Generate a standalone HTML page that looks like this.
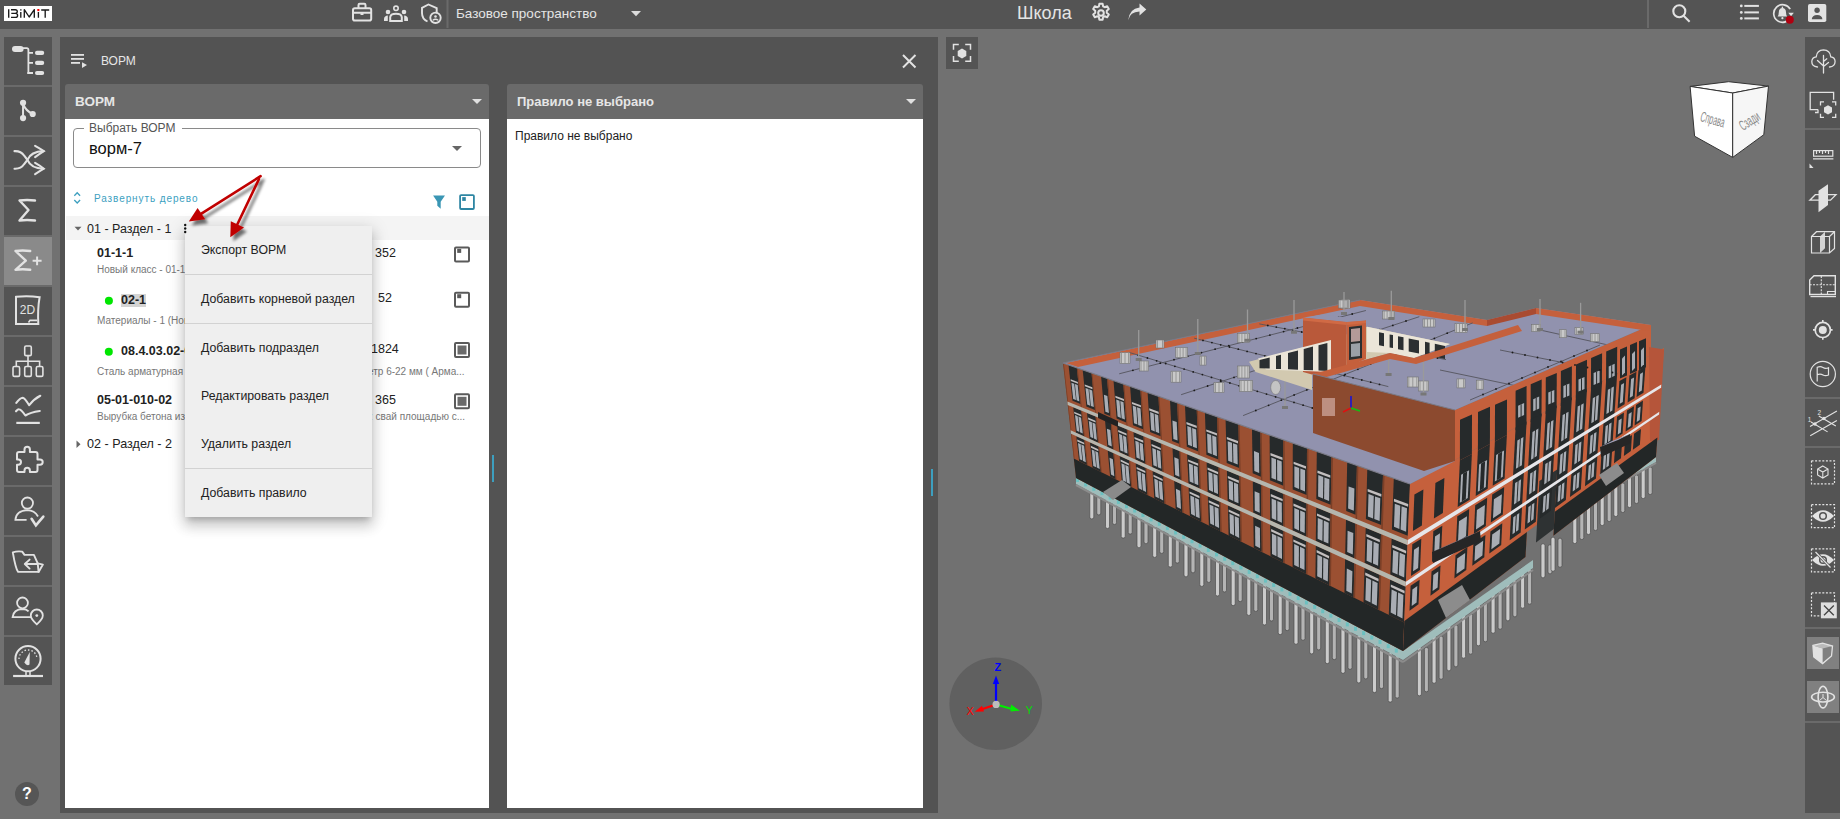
<!DOCTYPE html>
<html><head><meta charset="utf-8">
<style>
*{box-sizing:border-box;margin:0;padding:0}
html,body{width:1840px;height:819px;overflow:hidden;background:#717171;font-family:"Liberation Sans",sans-serif}
body{position:relative}
.a{position:absolute}
.t{position:absolute;white-space:nowrap;line-height:1}
#top{left:0;top:0;width:1840px;height:29px;background:#545454}
#ltb{left:4px;top:37px;width:48px;height:648px;background:#545454}
.lsep{position:absolute;left:0;width:48px;height:2px;background:#6a6a6a}
#panel{left:60px;top:37px;width:878px;height:776px;background:#535353}
.card{position:absolute;background:transparent}
.cbody{position:absolute;left:0;right:0;top:35px;bottom:0;background:#fff}
.chead{position:absolute;left:0;top:0;right:0;height:35px;background:#6a6a6a;border-radius:3px 3px 0 0}
#rtb{left:1805px;top:37px;width:35px;height:776px;background:#545454}
.rsep{position:absolute;left:0;width:35px;height:2px;background:#6a6a6a}
svg{position:absolute;left:0;top:0;overflow:visible}
</style></head><body>
<div id="top" class="a"></div>
<div id="ltb" class="a">
  <div class="lsep" style="top:48px"></div>
  <div class="lsep" style="top:98px"></div>
  <div class="lsep" style="top:148px"></div>
  <div class="lsep" style="top:198px"></div>
  <div class="a" style="left:0;top:200px;width:48px;height:48px;background:#8a8a8a"></div>
  <div class="lsep" style="top:248px"></div>
  <div class="lsep" style="top:298px"></div>
  <div class="lsep" style="top:348px"></div>
  <div class="lsep" style="top:398px"></div>
  <div class="lsep" style="top:448px"></div>
  <div class="lsep" style="top:498px"></div>
  <div class="lsep" style="top:548px"></div>
  <div class="lsep" style="top:598px"></div>
</div>
<div class="a" style="left:15px;top:782px;width:24px;height:24px;border-radius:50%;background:#565656"></div>
<div class="t" style="left:22px;top:786px;font-size:16px;font-weight:700;color:#fff;">?</div>

<svg id="bld" width="1840" height="819" viewBox="0 0 1840 819">
<rect x="1096.8" y="487.4" width="4" height="27.5" rx="1.8" fill="#b4b4b4" stroke="#4e4e4e" stroke-width="0.7"/>
<rect x="1112.5" y="496.1" width="4" height="28.4" rx="1.8" fill="#b4b4b4" stroke="#4e4e4e" stroke-width="0.7"/>
<rect x="1128.2" y="504.9" width="4" height="29.2" rx="1.8" fill="#b4b4b4" stroke="#4e4e4e" stroke-width="0.7"/>
<rect x="1144.0" y="513.6" width="4" height="30.1" rx="1.8" fill="#b4b4b4" stroke="#4e4e4e" stroke-width="0.7"/>
<rect x="1159.7" y="522.4" width="4" height="31.0" rx="1.8" fill="#b4b4b4" stroke="#4e4e4e" stroke-width="0.7"/>
<rect x="1175.3" y="531.1" width="4" height="32.0" rx="1.8" fill="#b4b4b4" stroke="#4e4e4e" stroke-width="0.7"/>
<rect x="1191.0" y="539.9" width="4" height="32.9" rx="1.8" fill="#b4b4b4" stroke="#4e4e4e" stroke-width="0.7"/>
<rect x="1206.8" y="548.6" width="4" height="33.8" rx="1.8" fill="#b4b4b4" stroke="#4e4e4e" stroke-width="0.7"/>
<rect x="1222.5" y="557.4" width="4" height="34.6" rx="1.8" fill="#b4b4b4" stroke="#4e4e4e" stroke-width="0.7"/>
<rect x="1238.2" y="566.1" width="4" height="35.5" rx="1.8" fill="#b4b4b4" stroke="#4e4e4e" stroke-width="0.7"/>
<rect x="1253.8" y="574.9" width="4" height="36.5" rx="1.8" fill="#b4b4b4" stroke="#4e4e4e" stroke-width="0.7"/>
<rect x="1269.5" y="583.6" width="4" height="37.4" rx="1.8" fill="#b4b4b4" stroke="#4e4e4e" stroke-width="0.7"/>
<rect x="1285.2" y="592.4" width="4" height="38.2" rx="1.8" fill="#b4b4b4" stroke="#4e4e4e" stroke-width="0.7"/>
<rect x="1301.0" y="601.1" width="4" height="39.1" rx="1.8" fill="#b4b4b4" stroke="#4e4e4e" stroke-width="0.7"/>
<rect x="1316.7" y="609.9" width="4" height="40.0" rx="1.8" fill="#b4b4b4" stroke="#4e4e4e" stroke-width="0.7"/>
<rect x="1332.3" y="618.6" width="4" height="41.0" rx="1.8" fill="#b4b4b4" stroke="#4e4e4e" stroke-width="0.7"/>
<rect x="1348.0" y="627.4" width="4" height="41.9" rx="1.8" fill="#b4b4b4" stroke="#4e4e4e" stroke-width="0.7"/>
<rect x="1363.8" y="636.1" width="4" height="42.8" rx="1.8" fill="#b4b4b4" stroke="#4e4e4e" stroke-width="0.7"/>
<rect x="1379.5" y="644.9" width="4" height="43.7" rx="1.8" fill="#b4b4b4" stroke="#4e4e4e" stroke-width="0.7"/>
<rect x="1395.2" y="653.6" width="4" height="44.5" rx="1.8" fill="#b4b4b4" stroke="#4e4e4e" stroke-width="0.7"/>
<rect x="1089.8" y="486.4" width="4" height="32.5" rx="1.8" fill="#cbcbcb" stroke="#4e4e4e" stroke-width="0.7"/>
<rect x="1105.5" y="495.1" width="4" height="33.4" rx="1.8" fill="#cbcbcb" stroke="#4e4e4e" stroke-width="0.7"/>
<rect x="1121.2" y="503.9" width="4" height="34.2" rx="1.8" fill="#cbcbcb" stroke="#4e4e4e" stroke-width="0.7"/>
<rect x="1137.0" y="512.6" width="4" height="35.1" rx="1.8" fill="#cbcbcb" stroke="#4e4e4e" stroke-width="0.7"/>
<rect x="1152.7" y="521.4" width="4" height="36.0" rx="1.8" fill="#cbcbcb" stroke="#4e4e4e" stroke-width="0.7"/>
<rect x="1168.3" y="530.1" width="4" height="37.0" rx="1.8" fill="#cbcbcb" stroke="#4e4e4e" stroke-width="0.7"/>
<rect x="1184.0" y="538.9" width="4" height="37.9" rx="1.8" fill="#cbcbcb" stroke="#4e4e4e" stroke-width="0.7"/>
<rect x="1199.8" y="547.6" width="4" height="38.8" rx="1.8" fill="#cbcbcb" stroke="#4e4e4e" stroke-width="0.7"/>
<rect x="1215.5" y="556.4" width="4" height="39.6" rx="1.8" fill="#cbcbcb" stroke="#4e4e4e" stroke-width="0.7"/>
<rect x="1231.2" y="565.1" width="4" height="40.5" rx="1.8" fill="#cbcbcb" stroke="#4e4e4e" stroke-width="0.7"/>
<rect x="1246.8" y="573.9" width="4" height="41.5" rx="1.8" fill="#cbcbcb" stroke="#4e4e4e" stroke-width="0.7"/>
<rect x="1262.5" y="582.6" width="4" height="42.4" rx="1.8" fill="#cbcbcb" stroke="#4e4e4e" stroke-width="0.7"/>
<rect x="1278.2" y="591.4" width="4" height="43.2" rx="1.8" fill="#cbcbcb" stroke="#4e4e4e" stroke-width="0.7"/>
<rect x="1294.0" y="600.1" width="4" height="44.1" rx="1.8" fill="#cbcbcb" stroke="#4e4e4e" stroke-width="0.7"/>
<rect x="1309.7" y="608.9" width="4" height="45.0" rx="1.8" fill="#cbcbcb" stroke="#4e4e4e" stroke-width="0.7"/>
<rect x="1325.3" y="617.6" width="4" height="46.0" rx="1.8" fill="#cbcbcb" stroke="#4e4e4e" stroke-width="0.7"/>
<rect x="1341.0" y="626.4" width="4" height="46.9" rx="1.8" fill="#cbcbcb" stroke="#4e4e4e" stroke-width="0.7"/>
<rect x="1356.8" y="635.1" width="4" height="47.8" rx="1.8" fill="#cbcbcb" stroke="#4e4e4e" stroke-width="0.7"/>
<rect x="1372.5" y="643.9" width="4" height="48.7" rx="1.8" fill="#cbcbcb" stroke="#4e4e4e" stroke-width="0.7"/>
<rect x="1388.2" y="652.6" width="4" height="49.5" rx="1.8" fill="#cbcbcb" stroke="#4e4e4e" stroke-width="0.7"/>
<rect x="1424.4" y="647.4" width="4" height="44.4" rx="1.8" fill="#b4b4b4" stroke="#4e4e4e" stroke-width="0.7"/>
<rect x="1439.1" y="636.1" width="4" height="43.1" rx="1.8" fill="#b4b4b4" stroke="#4e4e4e" stroke-width="0.7"/>
<rect x="1453.9" y="624.9" width="4" height="41.9" rx="1.8" fill="#b4b4b4" stroke="#4e4e4e" stroke-width="0.7"/>
<rect x="1468.6" y="613.6" width="4" height="40.6" rx="1.8" fill="#b4b4b4" stroke="#4e4e4e" stroke-width="0.7"/>
<rect x="1483.4" y="602.4" width="4" height="39.4" rx="1.8" fill="#b4b4b4" stroke="#4e4e4e" stroke-width="0.7"/>
<rect x="1498.1" y="591.1" width="4" height="38.1" rx="1.8" fill="#b4b4b4" stroke="#4e4e4e" stroke-width="0.7"/>
<rect x="1512.9" y="579.9" width="4" height="36.9" rx="1.8" fill="#b4b4b4" stroke="#4e4e4e" stroke-width="0.7"/>
<rect x="1527.6" y="568.6" width="4" height="35.6" rx="1.8" fill="#b4b4b4" stroke="#4e4e4e" stroke-width="0.7"/>
<rect x="1417.4" y="646.4" width="4" height="49.4" rx="1.8" fill="#cbcbcb" stroke="#4e4e4e" stroke-width="0.7"/>
<rect x="1432.1" y="635.1" width="4" height="48.1" rx="1.8" fill="#cbcbcb" stroke="#4e4e4e" stroke-width="0.7"/>
<rect x="1446.9" y="623.9" width="4" height="46.9" rx="1.8" fill="#cbcbcb" stroke="#4e4e4e" stroke-width="0.7"/>
<rect x="1461.6" y="612.6" width="4" height="45.6" rx="1.8" fill="#cbcbcb" stroke="#4e4e4e" stroke-width="0.7"/>
<rect x="1476.4" y="601.4" width="4" height="44.4" rx="1.8" fill="#cbcbcb" stroke="#4e4e4e" stroke-width="0.7"/>
<rect x="1491.1" y="590.1" width="4" height="43.1" rx="1.8" fill="#cbcbcb" stroke="#4e4e4e" stroke-width="0.7"/>
<rect x="1505.9" y="578.9" width="4" height="41.9" rx="1.8" fill="#cbcbcb" stroke="#4e4e4e" stroke-width="0.7"/>
<rect x="1520.6" y="567.6" width="4" height="40.6" rx="1.8" fill="#cbcbcb" stroke="#4e4e4e" stroke-width="0.7"/>
<rect x="1548.0" y="544.8" width="4" height="29.0" rx="1.8" fill="#b4b4b4" stroke="#4e4e4e" stroke-width="0.7"/>
<rect x="1558.0" y="538.2" width="4" height="29.0" rx="1.8" fill="#b4b4b4" stroke="#4e4e4e" stroke-width="0.7"/>
<rect x="1541.0" y="543.8" width="4" height="34.0" rx="1.8" fill="#cbcbcb" stroke="#4e4e4e" stroke-width="0.7"/>
<rect x="1551.0" y="537.2" width="4" height="34.0" rx="1.8" fill="#cbcbcb" stroke="#4e4e4e" stroke-width="0.7"/>
<rect x="1579.8" y="507.0" width="4" height="32.5" rx="1.8" fill="#b4b4b4" stroke="#4e4e4e" stroke-width="0.7"/>
<rect x="1593.5" y="499.0" width="4" height="31.5" rx="1.8" fill="#b4b4b4" stroke="#4e4e4e" stroke-width="0.7"/>
<rect x="1607.2" y="491.0" width="4" height="30.5" rx="1.8" fill="#b4b4b4" stroke="#4e4e4e" stroke-width="0.7"/>
<rect x="1620.8" y="483.0" width="4" height="29.5" rx="1.8" fill="#b4b4b4" stroke="#4e4e4e" stroke-width="0.7"/>
<rect x="1634.5" y="475.0" width="4" height="28.5" rx="1.8" fill="#b4b4b4" stroke="#4e4e4e" stroke-width="0.7"/>
<rect x="1648.2" y="467.0" width="4" height="27.5" rx="1.8" fill="#b4b4b4" stroke="#4e4e4e" stroke-width="0.7"/>
<rect x="1572.8" y="506.0" width="4" height="37.5" rx="1.8" fill="#cbcbcb" stroke="#4e4e4e" stroke-width="0.7"/>
<rect x="1586.5" y="498.0" width="4" height="36.5" rx="1.8" fill="#cbcbcb" stroke="#4e4e4e" stroke-width="0.7"/>
<rect x="1600.2" y="490.0" width="4" height="35.5" rx="1.8" fill="#cbcbcb" stroke="#4e4e4e" stroke-width="0.7"/>
<rect x="1613.8" y="482.0" width="4" height="34.5" rx="1.8" fill="#cbcbcb" stroke="#4e4e4e" stroke-width="0.7"/>
<rect x="1627.5" y="474.0" width="4" height="33.5" rx="1.8" fill="#cbcbcb" stroke="#4e4e4e" stroke-width="0.7"/>
<rect x="1641.2" y="466.0" width="4" height="32.5" rx="1.8" fill="#cbcbcb" stroke="#4e4e4e" stroke-width="0.7"/>
<polygon points="1076.0,476.0 1403.0,651.0 1403.0,660.0 1076.0,484.0" fill="#9fbdbb" />
<polygon points="1403.0,651.0 1533.0,560.0 1533.0,568.0 1403.0,660.0" fill="#9fbdbb" />
<polygon points="1561.0,508.0 1656.0,455.0 1656.0,462.0 1561.0,515.0" fill="#9fbdbb" />
<rect x="1076.0" y="478.0" width="3" height="4" fill="#6cc0c0"/>
<rect x="1084.2" y="482.4" width="3" height="4" fill="#6cc0c0"/>
<rect x="1092.3" y="486.8" width="3" height="4" fill="#6cc0c0"/>
<rect x="1100.5" y="491.1" width="3" height="4" fill="#6cc0c0"/>
<rect x="1108.7" y="495.5" width="3" height="4" fill="#6cc0c0"/>
<rect x="1116.9" y="499.9" width="3" height="4" fill="#6cc0c0"/>
<rect x="1125.0" y="504.2" width="3" height="4" fill="#6cc0c0"/>
<rect x="1133.2" y="508.6" width="3" height="4" fill="#6cc0c0"/>
<rect x="1141.4" y="513.0" width="3" height="4" fill="#6cc0c0"/>
<rect x="1149.6" y="517.4" width="3" height="4" fill="#6cc0c0"/>
<rect x="1157.8" y="521.8" width="3" height="4" fill="#6cc0c0"/>
<rect x="1165.9" y="526.1" width="3" height="4" fill="#6cc0c0"/>
<rect x="1174.1" y="530.5" width="3" height="4" fill="#6cc0c0"/>
<rect x="1182.3" y="534.9" width="3" height="4" fill="#6cc0c0"/>
<rect x="1190.5" y="539.2" width="3" height="4" fill="#6cc0c0"/>
<rect x="1198.6" y="543.6" width="3" height="4" fill="#6cc0c0"/>
<rect x="1206.8" y="548.0" width="3" height="4" fill="#6cc0c0"/>
<rect x="1215.0" y="552.4" width="3" height="4" fill="#6cc0c0"/>
<rect x="1223.2" y="556.8" width="3" height="4" fill="#6cc0c0"/>
<rect x="1231.3" y="561.1" width="3" height="4" fill="#6cc0c0"/>
<rect x="1239.5" y="565.5" width="3" height="4" fill="#6cc0c0"/>
<rect x="1247.7" y="569.9" width="3" height="4" fill="#6cc0c0"/>
<rect x="1255.8" y="574.2" width="3" height="4" fill="#6cc0c0"/>
<rect x="1264.0" y="578.6" width="3" height="4" fill="#6cc0c0"/>
<rect x="1272.2" y="583.0" width="3" height="4" fill="#6cc0c0"/>
<rect x="1280.4" y="587.4" width="3" height="4" fill="#6cc0c0"/>
<rect x="1288.5" y="591.8" width="3" height="4" fill="#6cc0c0"/>
<rect x="1296.7" y="596.1" width="3" height="4" fill="#6cc0c0"/>
<rect x="1304.9" y="600.5" width="3" height="4" fill="#6cc0c0"/>
<rect x="1313.1" y="604.9" width="3" height="4" fill="#6cc0c0"/>
<rect x="1321.2" y="609.2" width="3" height="4" fill="#6cc0c0"/>
<rect x="1329.4" y="613.6" width="3" height="4" fill="#6cc0c0"/>
<rect x="1337.6" y="618.0" width="3" height="4" fill="#6cc0c0"/>
<rect x="1345.8" y="622.4" width="3" height="4" fill="#6cc0c0"/>
<rect x="1354.0" y="626.8" width="3" height="4" fill="#6cc0c0"/>
<rect x="1362.1" y="631.1" width="3" height="4" fill="#6cc0c0"/>
<rect x="1370.3" y="635.5" width="3" height="4" fill="#6cc0c0"/>
<rect x="1378.5" y="639.9" width="3" height="4" fill="#6cc0c0"/>
<rect x="1386.7" y="644.2" width="3" height="4" fill="#6cc0c0"/>
<rect x="1394.8" y="648.6" width="3" height="4" fill="#6cc0c0"/>
<line x1="1076.0" y1="485.0" x2="1403.0" y2="662.0" stroke="#8c8c8c" stroke-width="2" />
<line x1="1403.0" y1="662.0" x2="1533.0" y2="570.0" stroke="#8c8c8c" stroke-width="2" />
<line x1="1561.0" y1="516.0" x2="1656.0" y2="463.0" stroke="#8c8c8c" stroke-width="2" />
<polygon points="1063.0,363.0 1410.0,484.0 1403.0,651.0 1076.0,478.0" fill="#9b5032" />
<polygon points="1073.8,458.4 1404.2,622.6 1403.0,651.0 1076.0,478.0" fill="#232727" />
<polygon points="1063.0,363.0 1063.8,363.3 1074.6,458.8 1073.8,458.4" fill="#7a3f27" />
<polygon points="1068.5,364.9 1076.8,367.8 1080.6,404.1 1072.5,400.8" fill="#262a2b" />
<polygon points="1073.2,407.2 1081.3,410.6 1084.0,436.3 1076.0,432.7" fill="#262a2b" />
<polygon points="1076.3,436.2 1084.3,439.8 1087.0,465.0 1079.1,461.1" fill="#262a2b" />
<polygon points="1071.4,382.7 1074.2,383.7 1076.0,400.0 1073.2,398.9" fill="#a9adb4" />
<polygon points="1074.9,384.0 1077.7,385.0 1079.4,401.4 1076.6,400.3" fill="#a9adb4" />
<polygon points="1070.6,379.2 1077.8,381.9 1078.0,383.8 1070.8,381.1" fill="#c2bebe" />
<polygon points="1075.0,415.1 1077.7,416.3 1079.4,432.0 1076.7,430.8" fill="#a9adb4" />
<polygon points="1078.4,416.6 1081.1,417.8 1082.8,433.5 1080.0,432.3" fill="#a9adb4" />
<polygon points="1074.1,411.7 1081.3,414.7 1081.5,416.6 1074.3,413.6" fill="#c2bebe" />
<polygon points="1078.0,443.0 1080.7,444.3 1082.4,460.5 1079.8,459.2" fill="#a9adb4" />
<polygon points="1081.3,444.5 1084.1,445.8 1085.8,462.2 1083.1,460.9" fill="#a9adb4" />
<polygon points="1077.2,439.5 1084.2,442.8 1084.4,444.6 1077.4,441.4" fill="#c2bebe" />
<polygon points="1076.8,367.8 1077.7,368.1 1087.8,465.4 1087.0,465.0" fill="#7a3f27" />
<polygon points="1082.7,369.9 1091.5,372.9 1095.0,409.9 1086.4,406.4" fill="#262a2b" />
<polygon points="1087.0,412.9 1095.6,416.5 1098.1,442.7 1089.6,438.9" fill="#262a2b" />
<polygon points="1090.0,442.4 1098.5,446.3 1100.9,471.9 1092.5,467.8" fill="#262a2b" />
<polygon points="1085.5,388.0 1088.5,389.1 1090.1,405.7 1087.2,404.5" fill="#a9adb4" />
<polygon points="1089.2,389.3 1092.2,390.4 1093.8,407.1 1090.8,405.9" fill="#a9adb4" />
<polygon points="1084.7,384.5 1092.4,387.3 1092.5,389.2 1084.9,386.3" fill="#c2bebe" />
<polygon points="1088.8,421.0 1091.8,422.3 1093.3,438.3 1090.4,437.0" fill="#a9adb4" />
<polygon points="1092.4,422.6 1095.4,423.8 1096.9,439.9 1094.0,438.6" fill="#a9adb4" />
<polygon points="1088.0,417.5 1095.5,420.7 1095.7,422.6 1088.2,419.4" fill="#c2bebe" />
<polygon points="1091.7,449.4 1094.5,450.7 1096.2,467.3 1093.3,465.9" fill="#a9adb4" />
<polygon points="1095.2,451.0 1098.1,452.4 1099.7,469.1 1096.8,467.6" fill="#a9adb4" />
<polygon points="1090.8,445.8 1098.3,449.3 1098.5,451.2 1091.0,447.7" fill="#c2bebe" />
<polygon points="1091.5,372.9 1092.4,373.3 1101.8,472.4 1100.9,471.9" fill="#7a3f27" />
<polygon points="1101.1,376.3 1107.0,378.3 1110.2,416.0 1104.4,413.7" fill="#262a2b" />
<polygon points="1105.0,420.3 1110.8,422.7 1113.1,449.5 1107.4,446.9" fill="#262a2b" />
<polygon points="1107.7,450.5 1113.4,453.1 1115.7,479.3 1110.1,476.5" fill="#262a2b" />
<polygon points="1103.9,394.8 1107.4,396.1 1108.9,413.1 1105.4,411.8" fill="#a9adb4" />
<polygon points="1106.9,428.7 1110.3,430.1 1111.8,446.5 1108.3,445.0" fill="#a9adb4" />
<polygon points="1109.5,457.7 1112.9,459.3 1114.3,476.3 1111.0,474.6" fill="#a9adb4" />
<polygon points="1107.0,378.3 1108.0,378.7 1116.6,479.7 1115.7,479.3" fill="#7a3f27" />
<polygon points="1113.5,380.6 1123.3,384.0 1126.2,422.5 1116.6,418.6" fill="#262a2b" />
<polygon points="1117.2,425.3 1126.8,429.3 1128.9,456.6 1119.4,452.3" fill="#262a2b" />
<polygon points="1119.7,456.0 1129.1,460.3 1131.2,487.0 1121.9,482.3" fill="#262a2b" />
<polygon points="1116.2,399.4 1119.5,400.7 1120.9,417.9 1117.6,416.6" fill="#a9adb4" />
<polygon points="1120.3,401.0 1123.5,402.2 1124.9,419.5 1121.6,418.2" fill="#a9adb4" />
<polygon points="1115.3,395.8 1123.9,398.9 1124.0,400.9 1115.5,397.7" fill="#c2bebe" />
<polygon points="1119.0,433.8 1122.2,435.2 1123.6,451.8 1120.3,450.4" fill="#a9adb4" />
<polygon points="1123.0,435.5 1126.2,436.9 1127.5,453.6 1124.3,452.2" fill="#a9adb4" />
<polygon points="1118.1,430.1 1126.5,433.6 1126.7,435.6 1118.3,432.1" fill="#c2bebe" />
<polygon points="1121.4,463.3 1124.6,464.8 1126.0,482.0 1122.8,480.4" fill="#a9adb4" />
<polygon points="1125.3,465.1 1128.5,466.6 1129.9,483.9 1126.7,482.4" fill="#a9adb4" />
<polygon points="1120.5,459.6 1128.8,463.4 1129.0,465.4 1120.7,461.5" fill="#c2bebe" />
<polygon points="1123.3,384.0 1124.3,384.4 1132.2,487.5 1131.2,487.0" fill="#7a3f27" />
<polygon points="1130.1,386.4 1140.4,390.0 1143.1,429.2 1133.0,425.2" fill="#262a2b" />
<polygon points="1133.5,432.1 1143.5,436.2 1145.4,464.1 1135.5,459.6" fill="#262a2b" />
<polygon points="1135.7,463.3 1145.7,467.9 1147.5,495.1 1137.7,490.2" fill="#262a2b" />
<polygon points="1132.7,405.6 1136.2,406.9 1137.4,424.5 1134.0,423.2" fill="#a9adb4" />
<polygon points="1137.0,407.2 1140.5,408.5 1141.7,426.2 1138.2,424.9" fill="#a9adb4" />
<polygon points="1131.9,401.9 1140.8,405.2 1141.0,407.2 1132.0,403.9" fill="#c2bebe" />
<polygon points="1135.3,440.7 1138.7,442.1 1139.9,459.1 1136.5,457.6" fill="#a9adb4" />
<polygon points="1139.5,442.5 1142.9,443.9 1144.0,461.0 1140.7,459.5" fill="#a9adb4" />
<polygon points="1134.4,436.9 1143.2,440.6 1143.4,442.7 1134.6,438.9" fill="#c2bebe" />
<polygon points="1137.4,470.8 1140.8,472.3 1142.0,489.9 1138.7,488.3" fill="#a9adb4" />
<polygon points="1141.6,472.7 1144.9,474.3 1146.1,492.0 1142.8,490.3" fill="#a9adb4" />
<polygon points="1136.6,467.0 1145.3,471.0 1145.4,473.0 1136.7,469.0" fill="#c2bebe" />
<polygon points="1140.4,390.0 1141.5,390.4 1148.5,495.6 1147.5,495.1" fill="#7a3f27" />
<polygon points="1147.6,392.5 1158.4,396.3 1160.7,436.3 1150.1,432.1" fill="#262a2b" />
<polygon points="1150.6,439.1 1161.1,443.4 1162.7,471.9 1152.3,467.2" fill="#262a2b" />
<polygon points="1152.6,471.0 1163.0,475.8 1164.6,503.6 1154.3,498.5" fill="#262a2b" />
<polygon points="1150.1,412.1 1153.7,413.5 1154.8,431.5 1151.2,430.0" fill="#a9adb4" />
<polygon points="1154.6,413.8 1158.2,415.2 1159.3,433.2 1155.7,431.8" fill="#a9adb4" />
<polygon points="1149.2,408.3 1158.6,411.8 1158.8,413.9 1149.3,410.4" fill="#c2bebe" />
<polygon points="1152.3,447.9 1155.9,449.4 1157.0,466.8 1153.4,465.2" fill="#a9adb4" />
<polygon points="1156.8,449.8 1160.3,451.3 1161.3,468.7 1157.8,467.2" fill="#a9adb4" />
<polygon points="1151.5,444.1 1160.7,448.0 1160.9,450.0 1151.6,446.1" fill="#c2bebe" />
<polygon points="1154.3,478.6 1157.8,480.3 1158.9,498.2 1155.4,496.5" fill="#a9adb4" />
<polygon points="1158.6,480.7 1162.1,482.3 1163.2,500.4 1159.7,498.6" fill="#a9adb4" />
<polygon points="1153.4,474.8 1162.6,479.0 1162.7,481.0 1153.6,476.8" fill="#c2bebe" />
<polygon points="1158.4,396.3 1159.5,396.6 1165.7,504.1 1164.6,503.6" fill="#7a3f27" />
<polygon points="1170.0,400.3 1177.1,402.8 1179.1,443.7 1172.1,440.9" fill="#262a2b" />
<polygon points="1172.5,448.1 1179.5,451.0 1180.9,480.1 1174.0,477.0" fill="#262a2b" />
<polygon points="1174.2,480.9 1181.1,484.0 1182.5,512.4 1175.7,509.1" fill="#262a2b" />
<polygon points="1172.4,420.5 1176.7,422.1 1177.6,440.5 1173.4,438.9" fill="#a9adb4" />
<polygon points="1174.3,457.2 1178.5,459.0 1179.4,476.8 1175.2,475.0" fill="#a9adb4" />
<polygon points="1175.9,488.7 1180.1,490.7 1181.0,509.1 1176.9,507.1" fill="#a9adb4" />
<polygon points="1177.1,402.8 1178.3,403.2 1183.6,513.0 1182.5,512.4" fill="#7a3f27" />
<polygon points="1185.0,405.5 1196.7,409.6 1198.4,451.5 1186.8,446.8" fill="#262a2b" />
<polygon points="1187.1,454.2 1198.6,458.9 1199.8,488.6 1188.5,483.5" fill="#262a2b" />
<polygon points="1188.6,487.5 1200.0,492.7 1201.1,521.7 1189.9,516.1" fill="#262a2b" />
<polygon points="1187.3,426.0 1191.2,427.5 1192.0,446.3 1188.1,444.7" fill="#a9adb4" />
<polygon points="1192.1,427.9 1196.1,429.4 1196.9,448.2 1192.9,446.7" fill="#a9adb4" />
<polygon points="1186.4,422.0 1196.7,425.8 1196.7,428.0 1186.5,424.2" fill="#c2bebe" />
<polygon points="1188.9,463.4 1192.8,465.1 1193.6,483.2 1189.7,481.4" fill="#a9adb4" />
<polygon points="1193.7,465.5 1197.6,467.1 1198.3,485.3 1194.5,483.6" fill="#a9adb4" />
<polygon points="1188.0,459.4 1198.2,463.6 1198.2,465.8 1188.1,461.5" fill="#c2bebe" />
<polygon points="1190.3,495.5 1194.2,497.3 1195.0,516.0 1191.1,514.1" fill="#a9adb4" />
<polygon points="1195.1,497.7 1198.9,499.5 1199.7,518.3 1195.8,516.5" fill="#a9adb4" />
<polygon points="1189.5,491.4 1199.4,496.0 1199.5,498.2 1189.6,493.5" fill="#c2bebe" />
<polygon points="1196.7,409.6 1197.9,410.1 1202.3,522.3 1201.1,521.7" fill="#7a3f27" />
<polygon points="1204.9,412.5 1217.1,416.7 1218.4,459.6 1206.4,454.7" fill="#262a2b" />
<polygon points="1206.6,462.2 1218.6,467.1 1219.5,497.5 1207.7,492.2" fill="#262a2b" />
<polygon points="1207.8,496.3 1219.7,501.7 1220.5,531.4 1208.9,525.6" fill="#262a2b" />
<polygon points="1207.1,433.5 1211.2,435.0 1211.8,454.2 1207.7,452.6" fill="#a9adb4" />
<polygon points="1212.2,435.4 1216.3,436.9 1216.9,456.2 1212.8,454.6" fill="#a9adb4" />
<polygon points="1206.2,429.4 1216.9,433.3 1217.0,435.5 1206.3,431.5" fill="#c2bebe" />
<polygon points="1208.4,471.7 1212.4,473.4 1213.1,491.9 1209.0,490.1" fill="#a9adb4" />
<polygon points="1213.4,473.8 1217.5,475.5 1218.0,494.1 1214.0,492.3" fill="#a9adb4" />
<polygon points="1207.5,467.6 1218.1,472.0 1218.1,474.2 1207.6,469.7" fill="#c2bebe" />
<polygon points="1209.5,504.4 1213.5,506.3 1214.2,525.5 1210.2,523.5" fill="#a9adb4" />
<polygon points="1214.5,506.7 1218.5,508.6 1219.1,527.9 1215.1,526.0" fill="#a9adb4" />
<polygon points="1208.7,500.3 1219.1,505.1 1219.1,507.3 1208.8,502.5" fill="#c2bebe" />
<polygon points="1217.1,416.7 1218.4,417.2 1221.8,532.0 1220.5,531.4" fill="#7a3f27" />
<polygon points="1225.6,419.7 1238.4,424.1 1239.3,467.9 1226.7,462.9" fill="#262a2b" />
<polygon points="1226.9,470.6 1239.4,475.7 1240.1,506.8 1227.7,501.2" fill="#262a2b" />
<polygon points="1227.9,505.4 1240.1,511.0 1240.8,541.4 1228.6,535.4" fill="#262a2b" />
<polygon points="1227.7,441.2 1232.0,442.8 1232.4,462.4 1228.2,460.7" fill="#a9adb4" />
<polygon points="1233.0,443.2 1237.3,444.8 1237.7,464.5 1233.4,462.8" fill="#a9adb4" />
<polygon points="1226.8,437.0 1238.0,441.1 1238.0,443.4 1226.9,439.2" fill="#c2bebe" />
<polygon points="1228.7,480.3 1232.9,482.1 1233.3,501.0 1229.1,499.1" fill="#a9adb4" />
<polygon points="1233.9,482.5 1238.1,484.3 1238.5,503.3 1234.3,501.4" fill="#a9adb4" />
<polygon points="1227.8,476.0 1238.8,480.6 1238.8,482.9 1227.9,478.3" fill="#c2bebe" />
<polygon points="1229.5,513.8 1233.7,515.7 1234.1,535.4 1230.0,533.3" fill="#a9adb4" />
<polygon points="1234.7,516.2 1238.8,518.1 1239.2,537.9 1235.1,535.8" fill="#a9adb4" />
<polygon points="1228.7,509.5 1239.5,514.5 1239.5,516.8 1228.7,511.8" fill="#c2bebe" />
<polygon points="1238.4,424.1 1239.7,424.6 1242.0,542.0 1240.8,541.4" fill="#7a3f27" />
<polygon points="1252.0,428.9 1260.4,431.8 1260.9,476.7 1252.7,473.3" fill="#262a2b" />
<polygon points="1252.8,481.2 1261.0,484.6 1261.4,516.4 1253.3,512.8" fill="#262a2b" />
<polygon points="1253.3,517.1 1261.4,520.8 1261.8,551.8 1253.8,547.9" fill="#262a2b" />
<polygon points="1254.0,451.0 1259.0,452.9 1259.2,473.1 1254.3,471.1" fill="#a9adb4" />
<polygon points="1254.6,491.2 1259.5,493.3 1259.7,512.8 1254.8,510.6" fill="#a9adb4" />
<polygon points="1255.1,525.7 1259.9,528.0 1260.1,548.2 1255.3,545.8" fill="#a9adb4" />
<polygon points="1260.4,431.8 1261.8,432.3 1263.1,552.5 1261.8,551.8" fill="#7a3f27" />
<polygon points="1269.6,435.0 1283.3,439.8 1283.4,485.7 1269.9,480.3" fill="#262a2b" />
<polygon points="1270.0,488.3 1283.4,493.8 1283.5,526.4 1270.2,520.4" fill="#262a2b" />
<polygon points="1270.2,524.8 1283.5,530.8 1283.5,562.7 1270.5,556.2" fill="#262a2b" />
<polygon points="1271.4,457.5 1276.0,459.3 1276.1,479.8 1271.5,478.0" fill="#a9adb4" />
<polygon points="1277.1,459.7 1281.7,461.4 1281.8,482.1 1277.2,480.3" fill="#a9adb4" />
<polygon points="1270.5,453.1 1282.5,457.6 1282.5,459.9 1270.5,455.5" fill="#c2bebe" />
<polygon points="1271.6,498.5 1276.2,500.4 1276.3,520.2 1271.8,518.2" fill="#a9adb4" />
<polygon points="1277.3,500.9 1281.8,502.8 1281.9,522.7 1277.4,520.7" fill="#a9adb4" />
<polygon points="1270.8,494.0 1282.6,499.0 1282.6,501.3 1270.8,496.4" fill="#c2bebe" />
<polygon points="1271.9,533.6 1276.4,535.7 1276.5,556.2 1272.0,554.0" fill="#a9adb4" />
<polygon points="1277.4,536.1 1281.9,538.2 1282.0,558.9 1277.5,556.7" fill="#a9adb4" />
<polygon points="1271.1,529.1 1282.7,534.5 1282.7,536.8 1271.1,531.4" fill="#c2bebe" />
<polygon points="1283.3,439.8 1284.7,440.3 1284.9,563.3 1283.5,562.7" fill="#7a3f27" />
<polygon points="1292.8,443.1 1307.0,448.1 1306.7,495.1 1292.7,489.4" fill="#262a2b" />
<polygon points="1292.7,497.7 1306.6,503.4 1306.4,536.7 1292.6,530.5" fill="#262a2b" />
<polygon points="1292.6,535.0 1306.3,541.3 1306.1,573.9 1292.6,567.2" fill="#262a2b" />
<polygon points="1294.4,466.2 1299.2,468.0 1299.1,489.0 1294.4,487.1" fill="#a9adb4" />
<polygon points="1300.3,468.4 1305.1,470.2 1305.0,491.4 1300.3,489.5" fill="#a9adb4" />
<polygon points="1293.6,461.7 1306.0,466.3 1306.0,468.7 1293.6,464.1" fill="#c2bebe" />
<polygon points="1294.3,508.1 1299.0,510.1 1299.0,530.4 1294.3,528.3" fill="#a9adb4" />
<polygon points="1300.2,510.5 1304.9,512.5 1304.7,533.0 1300.1,530.9" fill="#a9adb4" />
<polygon points="1293.5,503.5 1305.7,508.7 1305.7,511.1 1293.5,505.9" fill="#c2bebe" />
<polygon points="1294.2,544.0 1298.9,546.2 1298.8,567.2 1294.2,565.0" fill="#a9adb4" />
<polygon points="1300.0,546.7 1304.6,548.9 1304.5,570.0 1299.9,567.8" fill="#a9adb4" />
<polygon points="1293.4,539.4 1305.5,545.0 1305.5,547.4 1293.4,541.8" fill="#c2bebe" />
<polygon points="1307.0,448.1 1308.5,448.6 1307.5,574.6 1306.1,573.9" fill="#7a3f27" />
<polygon points="1316.8,451.5 1331.5,456.6 1330.7,504.8 1316.3,498.9" fill="#262a2b" />
<polygon points="1316.2,507.4 1330.6,513.3 1330.1,547.4 1315.8,541.0" fill="#262a2b" />
<polygon points="1315.8,545.6 1330.0,552.1 1329.5,585.5 1315.4,578.5" fill="#262a2b" />
<polygon points="1318.3,475.1 1323.3,477.0 1323.0,498.5 1318.1,496.6" fill="#a9adb4" />
<polygon points="1324.4,477.4 1329.4,479.3 1329.1,501.0 1324.1,499.0" fill="#a9adb4" />
<polygon points="1317.5,470.5 1330.3,475.2 1330.3,477.7 1317.4,472.9" fill="#c2bebe" />
<polygon points="1317.8,518.0 1322.7,520.1 1322.4,540.9 1317.6,538.7" fill="#a9adb4" />
<polygon points="1323.8,520.6 1328.7,522.7 1328.4,543.6 1323.6,541.4" fill="#a9adb4" />
<polygon points="1317.0,513.4 1329.7,518.7 1329.6,521.2 1317.0,515.8" fill="#c2bebe" />
<polygon points="1317.4,554.8 1322.2,557.1 1321.9,578.6 1317.2,576.3" fill="#a9adb4" />
<polygon points="1323.3,557.6 1328.2,559.8 1327.8,581.5 1323.1,579.2" fill="#a9adb4" />
<polygon points="1316.6,550.1 1329.1,555.9 1329.0,558.4 1316.6,552.6" fill="#c2bebe" />
<polygon points="1331.5,456.6 1333.0,457.2 1330.9,586.2 1329.5,585.5" fill="#7a3f27" />
<polygon points="1347.2,462.1 1356.9,465.5 1355.6,514.8 1346.2,511.0" fill="#262a2b" />
<polygon points="1346.0,519.6 1355.4,523.5 1354.5,558.5 1345.2,554.3" fill="#262a2b" />
<polygon points="1345.1,559.0 1354.4,563.3 1353.6,597.5 1344.4,592.9" fill="#262a2b" />
<polygon points="1348.6,486.5 1354.4,488.6 1353.8,510.8 1348.1,508.6" fill="#a9adb4" />
<polygon points="1347.6,530.7 1353.3,533.1 1352.8,554.5 1347.2,552.0" fill="#a9adb4" />
<polygon points="1346.8,568.6 1352.4,571.2 1351.8,593.4 1346.3,590.7" fill="#a9adb4" />
<polygon points="1356.9,465.5 1358.4,466.0 1355.1,598.2 1353.6,597.5" fill="#7a3f27" />
<polygon points="1367.3,469.1 1383.0,474.6 1381.3,525.1 1365.9,518.9" fill="#262a2b" />
<polygon points="1365.7,527.7 1381.0,534.1 1379.8,569.9 1364.7,563.1" fill="#262a2b" />
<polygon points="1364.5,567.9 1379.7,574.8 1378.5,609.8 1363.5,602.4" fill="#262a2b" />
<polygon points="1368.5,493.9 1373.8,495.9 1373.1,518.5 1367.9,516.4" fill="#a9adb4" />
<polygon points="1375.0,496.4 1380.3,498.3 1379.6,521.1 1374.3,519.0" fill="#a9adb4" />
<polygon points="1367.7,489.1 1381.4,494.1 1381.3,496.7 1367.6,491.6" fill="#c2bebe" />
<polygon points="1367.2,539.0 1372.4,541.2 1371.7,563.0 1366.6,560.7" fill="#a9adb4" />
<polygon points="1373.6,541.7 1378.8,543.9 1378.1,565.8 1373.0,563.5" fill="#a9adb4" />
<polygon points="1366.4,534.1 1379.9,539.7 1379.8,542.3 1366.3,536.6" fill="#c2bebe" />
<polygon points="1366.1,577.6 1371.2,580.0 1370.5,602.6 1365.4,600.1" fill="#a9adb4" />
<polygon points="1372.4,580.5 1377.6,582.9 1376.8,605.7 1371.7,603.2" fill="#a9adb4" />
<polygon points="1365.3,572.6 1378.6,578.8 1378.5,581.4 1365.2,575.2" fill="#c2bebe" />
<polygon points="1383.0,474.6 1384.6,475.2 1380.0,610.6 1378.5,609.8" fill="#7a3f27" />
<polygon points="1393.8,478.4 1410.0,484.0 1407.8,535.8 1391.9,529.4" fill="#262a2b" />
<polygon points="1391.6,538.4 1407.4,545.0 1405.9,581.7 1390.3,574.6" fill="#262a2b" />
<polygon points="1390.1,579.6 1405.7,586.7 1404.2,622.6 1388.8,615.0" fill="#262a2b" />
<polygon points="1394.8,503.8 1400.3,505.8 1399.4,529.0 1394.0,526.8" fill="#a9adb4" />
<polygon points="1401.6,506.3 1407.0,508.3 1406.1,531.7 1400.6,529.5" fill="#a9adb4" />
<polygon points="1394.0,498.8 1408.2,504.0 1408.1,506.7 1393.9,501.4" fill="#c2bebe" />
<polygon points="1393.1,549.9 1398.5,552.2 1397.6,574.6 1392.3,572.2" fill="#a9adb4" />
<polygon points="1399.7,552.7 1405.1,555.0 1404.2,577.5 1398.8,575.1" fill="#a9adb4" />
<polygon points="1392.3,544.9 1406.2,550.7 1406.1,553.4 1392.2,547.5" fill="#c2bebe" />
<polygon points="1391.6,589.5 1396.9,592.0 1396.0,615.2 1390.7,612.6" fill="#a9adb4" />
<polygon points="1398.1,592.5 1403.4,595.0 1402.5,618.4 1397.2,615.8" fill="#a9adb4" />
<polygon points="1390.8,584.4 1404.6,590.8 1404.5,593.5 1390.8,587.1" fill="#c2bebe" />
<polygon points="1067.4,401.5 1407.7,539.9 1407.4,545.0 1067.7,405.0" fill="#b5b6ae" />
<polygon points="1070.6,430.3 1405.9,581.7 1405.7,586.7 1071.0,433.7" fill="#b5b6ae" />
<polygon points="1098.0,412.0 1118.0,421.0 1118.0,427.0 1098.0,418.0" fill="#222" />
<polygon points="1103.0,492.0 1122.0,480.0 1131.0,487.0 1113.0,500.0" fill="#8a8a8a" />
<polygon points="1455.0,459.9 1455.0,410.0 1651.0,325.0 1651.0,355.0" fill="#c5603c" />
<polygon points="1410.0,484.0 1664.0,348.0 1656.0,457.0 1553.4,535.7 1554.8,511.8 1526.9,532.1 1525.5,557.1 1403.0,651.0" fill="#c5603c" />
<polygon points="1649.0,347.0 1664.0,349.6 1659.0,440.0 1650.0,441.0" fill="#b5553a" />
<polygon points="1404.3,620.9 1526.9,532.1 1525.5,557.1 1403.0,651.0" fill="#232727" />
<polygon points="1539.4,481.0 1557.2,469.4 1553.8,529.0 1536.0,542.5" fill="#2e3233" />
<polygon points="1554.8,511.8 1657.4,437.4 1656.0,457.0 1553.4,535.7" fill="#232727" />
<polygon points="1460.0,419.8 1472.0,414.6 1471.9,453.9 1459.9,460.3" fill="#262a2b" />
<polygon points="1459.9,460.3 1471.9,453.9 1469.7,499.7 1457.7,507.0" fill="#262a2b" />
<polygon points="1461.1,474.8 1469.1,470.3 1467.8,497.9 1459.8,502.7" fill="#a9adb4" />
<polygon points="1463.1,473.6 1467.1,471.4 1465.8,499.1 1461.8,501.5" fill="#262a2b" />
<polygon points="1457.3,516.3 1469.2,508.9 1467.9,537.9 1455.9,545.9" fill="#262a2b" />
<polygon points="1459.0,521.3 1467.0,516.3 1466.0,536.2 1458.0,541.5" fill="#a9adb4" />
<polygon points="1455.5,555.2 1467.4,547.1 1466.3,570.0 1454.4,578.6" fill="#262a2b" />
<polygon points="1457.2,558.5 1465.2,553.1 1464.5,568.4 1456.5,574.1" fill="#a9adb4" />
<polygon points="1478.0,412.0 1490.0,406.8 1489.9,444.1 1477.9,450.6" fill="#262a2b" />
<polygon points="1477.9,450.6 1489.9,444.1 1487.7,488.8 1475.7,496.1" fill="#262a2b" />
<polygon points="1479.1,464.6 1487.1,460.1 1485.8,487.0 1477.8,491.8" fill="#a9adb4" />
<polygon points="1481.1,463.5 1485.1,461.3 1483.8,488.2 1479.8,490.6" fill="#262a2b" />
<polygon points="1475.2,505.2 1487.2,497.7 1485.8,525.9 1473.9,533.9" fill="#262a2b" />
<polygon points="1476.9,509.9 1484.9,504.9 1484.0,524.3 1476.0,529.6" fill="#a9adb4" />
<polygon points="1473.4,543.0 1485.4,534.9 1484.3,557.2 1472.3,565.7" fill="#262a2b" />
<polygon points="1475.2,546.2 1483.2,540.7 1482.4,555.6 1474.5,561.3" fill="#a9adb4" />
<polygon points="1495.0,404.7 1507.0,399.4 1506.9,435.0 1494.9,441.4" fill="#262a2b" />
<polygon points="1494.9,441.4 1506.9,435.0 1504.6,478.4 1492.7,485.7" fill="#262a2b" />
<polygon points="1496.1,455.1 1504.1,450.6 1502.8,476.7 1494.8,481.6" fill="#a9adb4" />
<polygon points="1498.1,453.9 1502.1,451.7 1500.8,477.9 1496.8,480.3" fill="#262a2b" />
<polygon points="1492.2,494.6 1504.2,487.1 1502.8,514.6 1490.8,522.6" fill="#262a2b" />
<polygon points="1493.9,499.2 1501.9,494.2 1500.9,513.1 1493.0,518.3" fill="#a9adb4" />
<polygon points="1490.4,531.5 1502.3,523.3 1501.2,545.0 1489.3,553.6" fill="#262a2b" />
<polygon points="1492.2,534.5 1500.1,529.0 1499.4,543.6 1491.4,549.2" fill="#a9adb4" />
<polygon points="1515.6,390.7 1526.6,385.9 1526.5,424.4 1515.5,430.3" fill="#262a2b" />
<polygon points="1515.6,427.5 1526.6,421.6 1520.7,532.5 1509.7,540.3" fill="#262a2b" />
<polygon points="1517.4,440.4 1519.9,439.0 1518.4,467.3 1515.9,468.8" fill="#a9adb4" />
<polygon points="1520.9,438.4 1523.4,437.0 1521.9,465.2 1519.4,466.7" fill="#a9adb4" />
<polygon points="1515.1,483.0 1517.6,481.5 1516.5,502.7 1514.0,504.4" fill="#a9adb4" />
<polygon points="1518.6,480.9 1521.1,479.3 1520.0,500.4 1517.5,502.1" fill="#a9adb4" />
<polygon points="1513.3,517.2 1515.8,515.5 1514.9,532.5 1512.5,534.3" fill="#a9adb4" />
<polygon points="1516.8,514.8 1519.3,513.1 1518.4,530.0 1515.9,531.8" fill="#a9adb4" />
<polygon points="1518.1,405.7 1524.1,403.1 1524.1,415.1 1518.1,417.7" fill="#a9adb4" />
<polygon points="1520.6,404.6 1521.6,404.2 1521.6,416.7 1520.6,417.1" fill="#262a2b" />
<polygon points="1530.7,384.2 1541.7,379.4 1541.5,416.2 1530.6,422.2" fill="#262a2b" />
<polygon points="1530.7,419.4 1541.7,413.5 1535.8,521.7 1524.8,529.5" fill="#262a2b" />
<polygon points="1532.5,431.9 1535.0,430.5 1533.5,458.2 1531.0,459.7" fill="#a9adb4" />
<polygon points="1536.0,430.0 1538.4,428.6 1536.9,456.1 1534.5,457.6" fill="#a9adb4" />
<polygon points="1530.2,473.6 1532.7,472.0 1531.6,492.8 1529.1,494.4" fill="#a9adb4" />
<polygon points="1533.7,471.4 1536.2,469.8 1535.1,490.4 1532.6,492.1" fill="#a9adb4" />
<polygon points="1528.4,506.9 1530.9,505.2 1530.0,521.8 1527.5,523.6" fill="#a9adb4" />
<polygon points="1531.9,504.5 1534.4,502.8 1533.5,519.3 1531.0,521.1" fill="#a9adb4" />
<polygon points="1533.2,399.2 1539.2,396.6 1539.2,408.6 1533.2,411.2" fill="#a9adb4" />
<polygon points="1535.7,398.1 1536.7,397.7 1536.7,410.2 1535.7,410.6" fill="#262a2b" />
<polygon points="1545.8,377.6 1556.8,372.9 1556.6,408.1 1545.6,414.0" fill="#262a2b" />
<polygon points="1545.8,411.3 1556.8,405.4 1550.8,510.8 1539.8,518.7" fill="#262a2b" />
<polygon points="1547.5,423.5 1550.0,422.1 1548.5,449.1 1546.0,450.6" fill="#a9adb4" />
<polygon points="1551.0,421.5 1553.5,420.1 1552.0,447.0 1549.5,448.5" fill="#a9adb4" />
<polygon points="1545.3,464.1 1547.8,462.6 1546.6,482.8 1544.2,484.4" fill="#a9adb4" />
<polygon points="1548.8,461.9 1551.3,460.4 1550.1,480.5 1547.6,482.1" fill="#a9adb4" />
<polygon points="1543.5,496.6 1546.0,494.9 1545.1,511.1 1542.6,512.9" fill="#a9adb4" />
<polygon points="1547.0,494.2 1549.5,492.5 1548.5,508.6 1546.1,510.4" fill="#a9adb4" />
<polygon points="1548.3,392.6 1554.3,390.0 1554.3,402.0 1548.3,404.6" fill="#a9adb4" />
<polygon points="1550.8,391.5 1551.8,391.1 1551.8,403.6 1550.8,404.0" fill="#262a2b" />
<polygon points="1560.9,371.1 1571.9,366.3 1571.7,399.9 1560.7,405.9" fill="#262a2b" />
<polygon points="1560.9,403.2 1571.9,397.3 1565.9,500.0 1554.9,507.9" fill="#262a2b" />
<polygon points="1562.6,415.1 1565.1,413.7 1563.6,439.9 1561.1,441.5" fill="#a9adb4" />
<polygon points="1566.1,413.1 1568.6,411.7 1567.1,437.8 1564.6,439.3" fill="#a9adb4" />
<polygon points="1560.4,454.7 1562.9,453.1 1561.7,472.8 1559.2,474.4" fill="#a9adb4" />
<polygon points="1563.9,452.5 1566.3,450.9 1565.2,470.5 1562.7,472.1" fill="#a9adb4" />
<polygon points="1558.5,486.3 1561.0,484.6 1560.1,500.4 1557.6,502.2" fill="#a9adb4" />
<polygon points="1562.0,483.9 1564.5,482.2 1563.6,497.9 1561.1,499.7" fill="#a9adb4" />
<polygon points="1563.4,386.1 1569.4,383.5 1569.4,395.5 1563.4,398.1" fill="#a9adb4" />
<polygon points="1565.9,385.0 1566.9,384.6 1566.9,397.1 1565.9,397.5" fill="#262a2b" />
<polygon points="1576.0,364.5 1587.0,359.8 1586.8,391.8 1575.8,397.7" fill="#262a2b" />
<polygon points="1576.0,395.1 1587.0,389.2 1580.9,489.2 1570.0,497.1" fill="#262a2b" />
<polygon points="1577.7,406.6 1580.2,405.2 1578.7,430.8 1576.2,432.3" fill="#a9adb4" />
<polygon points="1581.2,404.7 1583.7,403.3 1582.2,428.7 1579.7,430.2" fill="#a9adb4" />
<polygon points="1575.4,445.2 1577.9,443.6 1576.8,462.8 1574.3,464.5" fill="#a9adb4" />
<polygon points="1578.9,443.0 1581.4,441.4 1580.3,460.5 1577.8,462.2" fill="#a9adb4" />
<polygon points="1573.6,476.0 1576.1,474.3 1575.2,489.7 1572.7,491.5" fill="#a9adb4" />
<polygon points="1577.1,473.6 1579.6,471.9 1578.7,487.2 1576.2,489.0" fill="#a9adb4" />
<polygon points="1578.5,379.5 1584.5,376.9 1584.5,388.9 1578.5,391.5" fill="#a9adb4" />
<polygon points="1581.0,378.4 1582.0,378.0 1582.0,390.5 1581.0,390.9" fill="#262a2b" />
<polygon points="1591.1,358.0 1602.1,353.2 1601.9,383.6 1590.9,389.5" fill="#262a2b" />
<polygon points="1591.1,387.0 1602.1,381.1 1596.0,478.4 1585.0,486.3" fill="#262a2b" />
<polygon points="1592.8,398.2 1595.3,396.8 1593.8,421.7 1591.3,423.2" fill="#a9adb4" />
<polygon points="1596.3,396.2 1598.8,394.9 1597.3,419.6 1594.8,421.1" fill="#a9adb4" />
<polygon points="1590.5,435.7 1593.0,434.2 1591.8,452.8 1589.4,454.5" fill="#a9adb4" />
<polygon points="1594.0,433.5 1596.5,432.0 1595.3,450.5 1592.8,452.2" fill="#a9adb4" />
<polygon points="1588.7,465.7 1591.2,464.0 1590.2,479.0 1587.7,480.8" fill="#a9adb4" />
<polygon points="1592.1,463.4 1594.6,461.7 1593.7,476.5 1591.2,478.3" fill="#a9adb4" />
<polygon points="1593.6,373.0 1599.6,370.4 1599.6,382.4 1593.6,385.0" fill="#a9adb4" />
<polygon points="1596.1,371.9 1597.1,371.5 1597.1,384.0 1596.1,384.4" fill="#262a2b" />
<polygon points="1606.2,351.4 1617.2,346.7 1617.0,375.5 1606.0,381.4" fill="#262a2b" />
<polygon points="1606.2,378.9 1617.2,373.1 1611.0,467.6 1600.1,475.5" fill="#262a2b" />
<polygon points="1607.9,389.8 1610.4,388.4 1608.9,412.6 1606.4,414.1" fill="#a9adb4" />
<polygon points="1611.4,387.8 1613.9,386.4 1612.4,410.5 1609.9,412.0" fill="#a9adb4" />
<polygon points="1605.6,426.3 1608.1,424.7 1606.9,442.9 1604.4,444.5" fill="#a9adb4" />
<polygon points="1609.1,424.1 1611.6,422.5 1610.4,440.5 1607.9,442.2" fill="#a9adb4" />
<polygon points="1603.7,455.5 1606.2,453.7 1605.3,468.3 1602.8,470.0" fill="#a9adb4" />
<polygon points="1607.2,453.1 1609.7,451.4 1608.8,465.8 1606.3,467.6" fill="#a9adb4" />
<polygon points="1608.7,366.4 1614.7,363.8 1614.7,375.8 1608.7,378.4" fill="#a9adb4" />
<polygon points="1611.2,365.3 1612.2,364.9 1612.2,377.4 1611.2,377.8" fill="#262a2b" />
<polygon points="1620.0,349.4 1627.0,346.4 1627.0,375.4 1620.0,378.4" fill="#262a2b" />
<polygon points="1622.0,358.4 1625.0,355.4 1625.0,372.4 1622.0,375.4" fill="#a9adb4" />
<polygon points="1619.4,381.1 1626.4,377.2 1624.6,404.2 1617.6,408.5" fill="#262a2b" />
<polygon points="1621.1,384.7 1624.1,383.0 1622.8,401.9 1619.8,403.7" fill="#a9adb4" />
<polygon points="1617.0,416.8 1624.0,412.4 1622.6,433.6 1615.6,438.2" fill="#262a2b" />
<polygon points="1615.1,446.6 1622.1,441.8 1621.0,458.2 1614.0,463.2" fill="#262a2b" />
<polygon points="1618.7,420.3 1621.7,418.4 1620.8,432.6 1617.8,434.5" fill="#a9adb4" />
<polygon points="1630.0,345.1 1637.0,342.1 1637.0,371.1 1630.0,374.1" fill="#262a2b" />
<polygon points="1632.0,354.1 1635.0,351.1 1635.0,368.1 1632.0,371.1" fill="#a9adb4" />
<polygon points="1629.4,375.5 1636.4,371.7 1634.6,398.2 1627.6,402.4" fill="#262a2b" />
<polygon points="1631.1,379.1 1634.1,377.4 1632.8,395.9 1629.8,397.7" fill="#a9adb4" />
<polygon points="1627.0,410.6 1634.0,406.2 1632.6,426.9 1625.6,431.6" fill="#262a2b" />
<polygon points="1625.0,439.8 1632.0,435.0 1630.9,451.1 1623.9,456.1" fill="#262a2b" />
<polygon points="1628.7,414.0 1631.7,412.1 1630.7,426.0 1627.7,427.9" fill="#a9adb4" />
<polygon points="1639.0,341.2 1646.0,338.2 1646.0,367.2 1639.0,370.2" fill="#262a2b" />
<polygon points="1641.0,350.2 1644.0,347.2 1644.0,364.2 1641.0,367.2" fill="#a9adb4" />
<polygon points="1638.4,370.6 1645.4,366.7 1643.5,392.7 1636.6,396.9" fill="#262a2b" />
<polygon points="1640.1,374.0 1643.0,372.3 1641.8,390.5 1638.8,392.3" fill="#a9adb4" />
<polygon points="1636.0,405.0 1643.0,400.6 1641.6,421.0 1634.6,425.6" fill="#262a2b" />
<polygon points="1634.0,433.7 1641.0,428.9 1639.9,444.7 1632.9,449.7" fill="#262a2b" />
<polygon points="1637.7,408.3 1640.7,406.4 1639.7,420.0 1636.7,422.0" fill="#a9adb4" />
<polygon points="1414.4,494.6 1423.4,489.6 1421.9,525.6 1412.9,531.1" fill="#262a2b" />
<polygon points="1412.3,544.3 1421.3,538.7 1420.0,569.9 1411.0,575.9" fill="#262a2b" />
<polygon points="1414.0,549.7 1419.0,546.6 1418.1,567.9 1413.1,571.2" fill="#a9adb4" />
<polygon points="1410.6,585.8 1419.6,579.7 1418.5,604.3 1409.5,610.7" fill="#262a2b" />
<polygon points="1412.4,589.4 1417.3,586.0 1416.6,602.4 1411.7,606.0" fill="#a9adb4" />
<polygon points="1435.4,483.0 1444.4,478.0 1442.9,513.0 1433.9,518.4" fill="#262a2b" />
<polygon points="1433.3,531.3 1442.3,525.7 1440.9,555.9 1432.0,561.9" fill="#262a2b" />
<polygon points="1435.0,536.5 1440.0,533.3 1439.1,554.0 1434.1,557.3" fill="#a9adb4" />
<polygon points="1431.5,571.5 1440.5,565.4 1439.4,589.3 1430.5,595.7" fill="#262a2b" />
<polygon points="1433.3,575.0 1438.3,571.6 1437.6,587.5 1432.6,591.1" fill="#a9adb4" />
<polygon points="1407.7,539.9 1661.3,384.5 1661.1,387.8 1407.4,545.0" fill="#e6e6ea" />
<polygon points="1405.9,581.7 1659.3,411.8 1659.1,414.5 1405.7,585.9" fill="#e6e6ea" />
<polygon points="1432.0,552.0 1480.0,531.0 1481.0,541.0 1433.0,563.0" fill="#262626" />
<polygon points="1432.0,552.0 1468.0,536.0 1480.0,531.0 1444.0,547.0" fill="#9a9ab5" />
<polygon points="1600.0,447.0 1630.0,434.0 1631.0,443.0 1601.0,457.0" fill="#262626" />
<polygon points="1600.0,447.0 1618.0,440.0 1630.0,434.0 1612.0,441.0" fill="#a0a0b8" />
<polygon points="1438.0,600.0 1462.0,585.0 1470.0,600.0 1446.0,618.0" fill="#8c8c8c" />
<polygon points="1599.0,475.0 1617.0,463.0 1624.0,473.0 1606.0,486.0" fill="#8c8c8c" />
<polygon points="1063.0,363.0 1360.0,300.0 1487.0,320.0 1536.0,308.0 1651.0,325.0 1455.0,410.0 1455.0,461.0 1410.0,484.0" fill="#9192ae" />
<polygon points="1066.0,363.0 1360.0,300.0 1360.0,306.0 1078.0,367.0" fill="#c5603c" />
<polygon points="1360.0,300.0 1487.0,320.0 1487.0,326.0 1360.0,306.0" fill="#c5603c" />
<polygon points="1487.0,320.0 1536.0,308.0 1536.0,314.0 1487.0,326.0" fill="#a94b31" />
<polygon points="1536.0,308.0 1651.0,325.0 1649.0,331.0 1536.0,314.0" fill="#c5603c" />
<line x1="1063.0" y1="363.0" x2="1410.0" y2="484.0" stroke="#7a7a86" stroke-width="1.2" />
<line x1="1063.0" y1="363.0" x2="1360.0" y2="300.0" stroke="#7a7a86" stroke-width="1" />
<clipPath id="roofclip"><polygon points="1063.0,363.0 1360.0,300.0 1487.0,320.0 1536.0,308.0 1651.0,325.0 1455.0,410.0 1455.0,461.0 1410.0,484.0"/></clipPath>
<g clip-path="url(#roofclip)" stroke="#55555e" stroke-width="0.9" fill="none">
<line x1="1129.1" y1="352.4" x2="1330.6" y2="413.5"/>
<line x1="1194.2" y1="338.2" x2="1388.3" y2="386.6"/>
<line x1="1259.3" y1="323.9" x2="1446.0" y2="359.6"/>
<line x1="1119.2" y1="373.8" x2="1365.9" y2="310.5"/>
<line x1="1181.1" y1="394.7" x2="1419.3" y2="316.7"/>
<line x1="1243.1" y1="415.6" x2="1472.7" y2="322.9"/>
<line x1="1470.0" y1="400.0" x2="1600.0" y2="345.0"/>
<line x1="1520.0" y1="405.0" x2="1640.0" y2="340.0"/>
<line x1="1440.0" y1="370.0" x2="1560.0" y2="395.0"/>
<line x1="1500.0" y1="350.0" x2="1625.0" y2="375.0"/>
<line x1="1540.0" y1="330.0" x2="1640.0" y2="352.0"/>
</g>
<circle cx="1138.3" cy="355.2" r="0.9" fill="#1a1a1a"/>
<circle cx="1147.4" cy="358.0" r="0.9" fill="#1a1a1a"/>
<circle cx="1156.6" cy="360.8" r="0.9" fill="#1a1a1a"/>
<circle cx="1165.7" cy="363.5" r="0.9" fill="#1a1a1a"/>
<circle cx="1174.9" cy="366.3" r="0.9" fill="#1a1a1a"/>
<circle cx="1184.1" cy="369.1" r="0.9" fill="#1a1a1a"/>
<circle cx="1193.2" cy="371.9" r="0.9" fill="#1a1a1a"/>
<circle cx="1202.4" cy="374.6" r="0.9" fill="#1a1a1a"/>
<circle cx="1211.5" cy="377.4" r="0.9" fill="#1a1a1a"/>
<circle cx="1220.7" cy="380.2" r="0.9" fill="#1a1a1a"/>
<circle cx="1229.9" cy="383.0" r="0.9" fill="#1a1a1a"/>
<circle cx="1239.0" cy="385.8" r="0.9" fill="#1a1a1a"/>
<circle cx="1248.2" cy="388.5" r="0.9" fill="#1a1a1a"/>
<circle cx="1257.3" cy="391.3" r="0.9" fill="#1a1a1a"/>
<circle cx="1266.5" cy="394.1" r="0.9" fill="#1a1a1a"/>
<circle cx="1275.6" cy="396.9" r="0.9" fill="#1a1a1a"/>
<circle cx="1284.8" cy="399.6" r="0.9" fill="#1a1a1a"/>
<circle cx="1294.0" cy="402.4" r="0.9" fill="#1a1a1a"/>
<circle cx="1303.1" cy="405.2" r="0.9" fill="#1a1a1a"/>
<circle cx="1312.3" cy="408.0" r="0.9" fill="#1a1a1a"/>
<circle cx="1321.4" cy="410.7" r="0.9" fill="#1a1a1a"/>
<circle cx="1203.0" cy="340.4" r="0.9" fill="#1a1a1a"/>
<circle cx="1211.9" cy="342.6" r="0.9" fill="#1a1a1a"/>
<circle cx="1220.7" cy="344.8" r="0.9" fill="#1a1a1a"/>
<circle cx="1229.5" cy="347.0" r="0.9" fill="#1a1a1a"/>
<circle cx="1238.3" cy="349.2" r="0.9" fill="#1a1a1a"/>
<circle cx="1247.1" cy="351.4" r="0.9" fill="#1a1a1a"/>
<circle cx="1256.0" cy="353.6" r="0.9" fill="#1a1a1a"/>
<circle cx="1264.8" cy="355.8" r="0.9" fill="#1a1a1a"/>
<circle cx="1273.6" cy="358.0" r="0.9" fill="#1a1a1a"/>
<circle cx="1282.4" cy="360.2" r="0.9" fill="#1a1a1a"/>
<circle cx="1291.3" cy="362.4" r="0.9" fill="#1a1a1a"/>
<circle cx="1300.1" cy="364.6" r="0.9" fill="#1a1a1a"/>
<circle cx="1308.9" cy="366.8" r="0.9" fill="#1a1a1a"/>
<circle cx="1317.7" cy="369.0" r="0.9" fill="#1a1a1a"/>
<circle cx="1326.5" cy="371.2" r="0.9" fill="#1a1a1a"/>
<circle cx="1335.4" cy="373.4" r="0.9" fill="#1a1a1a"/>
<circle cx="1344.2" cy="375.6" r="0.9" fill="#1a1a1a"/>
<circle cx="1353.0" cy="377.8" r="0.9" fill="#1a1a1a"/>
<circle cx="1361.8" cy="380.0" r="0.9" fill="#1a1a1a"/>
<circle cx="1370.7" cy="382.2" r="0.9" fill="#1a1a1a"/>
<circle cx="1379.5" cy="384.4" r="0.9" fill="#1a1a1a"/>
<circle cx="1267.8" cy="325.5" r="0.9" fill="#1a1a1a"/>
<circle cx="1276.3" cy="327.1" r="0.9" fill="#1a1a1a"/>
<circle cx="1284.8" cy="328.7" r="0.9" fill="#1a1a1a"/>
<circle cx="1293.2" cy="330.4" r="0.9" fill="#1a1a1a"/>
<circle cx="1301.7" cy="332.0" r="0.9" fill="#1a1a1a"/>
<circle cx="1310.2" cy="333.6" r="0.9" fill="#1a1a1a"/>
<circle cx="1318.7" cy="335.2" r="0.9" fill="#1a1a1a"/>
<circle cx="1327.2" cy="336.9" r="0.9" fill="#1a1a1a"/>
<circle cx="1335.7" cy="338.5" r="0.9" fill="#1a1a1a"/>
<circle cx="1344.2" cy="340.1" r="0.9" fill="#1a1a1a"/>
<circle cx="1352.7" cy="341.7" r="0.9" fill="#1a1a1a"/>
<circle cx="1361.1" cy="343.4" r="0.9" fill="#1a1a1a"/>
<circle cx="1369.6" cy="345.0" r="0.9" fill="#1a1a1a"/>
<circle cx="1378.1" cy="346.6" r="0.9" fill="#1a1a1a"/>
<circle cx="1386.6" cy="348.2" r="0.9" fill="#1a1a1a"/>
<circle cx="1395.1" cy="349.9" r="0.9" fill="#1a1a1a"/>
<circle cx="1403.6" cy="351.5" r="0.9" fill="#1a1a1a"/>
<circle cx="1412.1" cy="353.1" r="0.9" fill="#1a1a1a"/>
<circle cx="1420.5" cy="354.7" r="0.9" fill="#1a1a1a"/>
<circle cx="1429.0" cy="356.4" r="0.9" fill="#1a1a1a"/>
<circle cx="1437.5" cy="358.0" r="0.9" fill="#1a1a1a"/>
<circle cx="1132.9" cy="370.3" r="0.9" fill="#1a1a1a"/>
<circle cx="1146.6" cy="366.8" r="0.9" fill="#1a1a1a"/>
<circle cx="1160.3" cy="363.2" r="0.9" fill="#1a1a1a"/>
<circle cx="1174.0" cy="359.7" r="0.9" fill="#1a1a1a"/>
<circle cx="1187.7" cy="356.2" r="0.9" fill="#1a1a1a"/>
<circle cx="1201.4" cy="352.7" r="0.9" fill="#1a1a1a"/>
<circle cx="1215.1" cy="349.2" r="0.9" fill="#1a1a1a"/>
<circle cx="1228.8" cy="345.6" r="0.9" fill="#1a1a1a"/>
<circle cx="1242.5" cy="342.1" r="0.9" fill="#1a1a1a"/>
<circle cx="1256.2" cy="338.6" r="0.9" fill="#1a1a1a"/>
<circle cx="1269.9" cy="335.1" r="0.9" fill="#1a1a1a"/>
<circle cx="1283.6" cy="331.6" r="0.9" fill="#1a1a1a"/>
<circle cx="1297.4" cy="328.0" r="0.9" fill="#1a1a1a"/>
<circle cx="1311.1" cy="324.5" r="0.9" fill="#1a1a1a"/>
<circle cx="1324.8" cy="321.0" r="0.9" fill="#1a1a1a"/>
<circle cx="1338.5" cy="317.5" r="0.9" fill="#1a1a1a"/>
<circle cx="1352.2" cy="314.0" r="0.9" fill="#1a1a1a"/>
<circle cx="1194.3" cy="390.4" r="0.9" fill="#1a1a1a"/>
<circle cx="1207.6" cy="386.0" r="0.9" fill="#1a1a1a"/>
<circle cx="1220.8" cy="381.7" r="0.9" fill="#1a1a1a"/>
<circle cx="1234.0" cy="377.4" r="0.9" fill="#1a1a1a"/>
<circle cx="1247.3" cy="373.0" r="0.9" fill="#1a1a1a"/>
<circle cx="1260.5" cy="368.7" r="0.9" fill="#1a1a1a"/>
<circle cx="1273.7" cy="364.4" r="0.9" fill="#1a1a1a"/>
<circle cx="1287.0" cy="360.0" r="0.9" fill="#1a1a1a"/>
<circle cx="1300.2" cy="355.7" r="0.9" fill="#1a1a1a"/>
<circle cx="1313.4" cy="351.4" r="0.9" fill="#1a1a1a"/>
<circle cx="1326.7" cy="347.0" r="0.9" fill="#1a1a1a"/>
<circle cx="1339.9" cy="342.7" r="0.9" fill="#1a1a1a"/>
<circle cx="1353.1" cy="338.4" r="0.9" fill="#1a1a1a"/>
<circle cx="1366.4" cy="334.0" r="0.9" fill="#1a1a1a"/>
<circle cx="1379.6" cy="329.7" r="0.9" fill="#1a1a1a"/>
<circle cx="1392.8" cy="325.4" r="0.9" fill="#1a1a1a"/>
<circle cx="1406.0" cy="321.0" r="0.9" fill="#1a1a1a"/>
<circle cx="1255.8" cy="410.5" r="0.9" fill="#1a1a1a"/>
<circle cx="1268.6" cy="405.3" r="0.9" fill="#1a1a1a"/>
<circle cx="1281.3" cy="400.2" r="0.9" fill="#1a1a1a"/>
<circle cx="1294.1" cy="395.0" r="0.9" fill="#1a1a1a"/>
<circle cx="1306.8" cy="389.9" r="0.9" fill="#1a1a1a"/>
<circle cx="1319.6" cy="384.7" r="0.9" fill="#1a1a1a"/>
<circle cx="1332.4" cy="379.6" r="0.9" fill="#1a1a1a"/>
<circle cx="1345.1" cy="374.4" r="0.9" fill="#1a1a1a"/>
<circle cx="1357.9" cy="369.3" r="0.9" fill="#1a1a1a"/>
<circle cx="1370.6" cy="364.1" r="0.9" fill="#1a1a1a"/>
<circle cx="1383.4" cy="359.0" r="0.9" fill="#1a1a1a"/>
<circle cx="1396.1" cy="353.8" r="0.9" fill="#1a1a1a"/>
<circle cx="1408.9" cy="348.7" r="0.9" fill="#1a1a1a"/>
<circle cx="1421.6" cy="343.5" r="0.9" fill="#1a1a1a"/>
<circle cx="1434.4" cy="338.4" r="0.9" fill="#1a1a1a"/>
<circle cx="1447.2" cy="333.2" r="0.9" fill="#1a1a1a"/>
<circle cx="1459.9" cy="328.1" r="0.9" fill="#1a1a1a"/>
<circle cx="1483.0" cy="394.5" r="0.9" fill="#1a1a1a"/>
<circle cx="1496.0" cy="389.0" r="0.9" fill="#1a1a1a"/>
<circle cx="1509.0" cy="383.5" r="0.9" fill="#1a1a1a"/>
<circle cx="1522.0" cy="378.0" r="0.9" fill="#1a1a1a"/>
<circle cx="1535.0" cy="372.5" r="0.9" fill="#1a1a1a"/>
<circle cx="1548.0" cy="367.0" r="0.9" fill="#1a1a1a"/>
<circle cx="1561.0" cy="361.5" r="0.9" fill="#1a1a1a"/>
<circle cx="1574.0" cy="356.0" r="0.9" fill="#1a1a1a"/>
<circle cx="1587.0" cy="350.5" r="0.9" fill="#1a1a1a"/>
<circle cx="1512.5" cy="352.5" r="0.9" fill="#1a1a1a"/>
<circle cx="1525.0" cy="355.0" r="0.9" fill="#1a1a1a"/>
<circle cx="1537.5" cy="357.5" r="0.9" fill="#1a1a1a"/>
<circle cx="1550.0" cy="360.0" r="0.9" fill="#1a1a1a"/>
<circle cx="1562.5" cy="362.5" r="0.9" fill="#1a1a1a"/>
<circle cx="1575.0" cy="365.0" r="0.9" fill="#1a1a1a"/>
<circle cx="1587.5" cy="367.5" r="0.9" fill="#1a1a1a"/>
<circle cx="1600.0" cy="370.0" r="0.9" fill="#1a1a1a"/>
<circle cx="1612.5" cy="372.5" r="0.9" fill="#1a1a1a"/>
<rect x="1120.0" y="352.5" width="10" height="11" fill="#c9c9c9" stroke="#707070" stroke-width="0.6"/>
<line x1="1121.5" y1="352.5" x2="1121.5" y2="363.5" stroke="#8a8a8a" stroke-width="0.8"/>
<line x1="1125.0" y1="352.5" x2="1125.0" y2="363.5" stroke="#8a8a8a" stroke-width="0.8"/>
<line x1="1128.5" y1="352.5" x2="1128.5" y2="363.5" stroke="#8a8a8a" stroke-width="0.8"/>
<rect x="1139.5" y="361.0" width="9" height="10" fill="#c9c9c9" stroke="#707070" stroke-width="0.6"/>
<line x1="1141.0" y1="361.0" x2="1141.0" y2="371.0" stroke="#8a8a8a" stroke-width="0.8"/>
<line x1="1144.0" y1="361.0" x2="1144.0" y2="371.0" stroke="#8a8a8a" stroke-width="0.8"/>
<line x1="1147.0" y1="361.0" x2="1147.0" y2="371.0" stroke="#8a8a8a" stroke-width="0.8"/>
<rect x="1175.6" y="347.5" width="12" height="10" fill="#c9c9c9" stroke="#707070" stroke-width="0.6"/>
<line x1="1177.1" y1="347.5" x2="1177.1" y2="357.5" stroke="#8a8a8a" stroke-width="0.8"/>
<line x1="1180.1" y1="347.5" x2="1180.1" y2="357.5" stroke="#8a8a8a" stroke-width="0.8"/>
<line x1="1183.1" y1="347.5" x2="1183.1" y2="357.5" stroke="#8a8a8a" stroke-width="0.8"/>
<line x1="1186.1" y1="347.5" x2="1186.1" y2="357.5" stroke="#8a8a8a" stroke-width="0.8"/>
<rect x="1171.0" y="371.2" width="10" height="11" fill="#c9c9c9" stroke="#707070" stroke-width="0.6"/>
<line x1="1172.5" y1="371.2" x2="1172.5" y2="382.2" stroke="#8a8a8a" stroke-width="0.8"/>
<line x1="1176.0" y1="371.2" x2="1176.0" y2="382.2" stroke="#8a8a8a" stroke-width="0.8"/>
<line x1="1179.5" y1="371.2" x2="1179.5" y2="382.2" stroke="#8a8a8a" stroke-width="0.8"/>
<rect x="1214.0" y="382.5" width="10" height="10" fill="#c9c9c9" stroke="#707070" stroke-width="0.6"/>
<line x1="1215.5" y1="382.5" x2="1215.5" y2="392.5" stroke="#8a8a8a" stroke-width="0.8"/>
<line x1="1219.0" y1="382.5" x2="1219.0" y2="392.5" stroke="#8a8a8a" stroke-width="0.8"/>
<line x1="1222.5" y1="382.5" x2="1222.5" y2="392.5" stroke="#8a8a8a" stroke-width="0.8"/>
<rect x="1237.4" y="333.3" width="12" height="9" fill="#c9c9c9" stroke="#707070" stroke-width="0.6"/>
<line x1="1238.9" y1="333.3" x2="1238.9" y2="342.3" stroke="#8a8a8a" stroke-width="0.8"/>
<line x1="1241.9" y1="333.3" x2="1241.9" y2="342.3" stroke="#8a8a8a" stroke-width="0.8"/>
<line x1="1244.9" y1="333.3" x2="1244.9" y2="342.3" stroke="#8a8a8a" stroke-width="0.8"/>
<line x1="1247.9" y1="333.3" x2="1247.9" y2="342.3" stroke="#8a8a8a" stroke-width="0.8"/>
<rect x="1237.4" y="366.0" width="12" height="12" fill="#c9c9c9" stroke="#707070" stroke-width="0.6"/>
<line x1="1238.9" y1="366.0" x2="1238.9" y2="378.0" stroke="#8a8a8a" stroke-width="0.8"/>
<line x1="1241.9" y1="366.0" x2="1241.9" y2="378.0" stroke="#8a8a8a" stroke-width="0.8"/>
<line x1="1244.9" y1="366.0" x2="1244.9" y2="378.0" stroke="#8a8a8a" stroke-width="0.8"/>
<line x1="1247.9" y1="366.0" x2="1247.9" y2="378.0" stroke="#8a8a8a" stroke-width="0.8"/>
<rect x="1239.5" y="380.5" width="13" height="11" fill="#c9c9c9" stroke="#707070" stroke-width="0.6"/>
<line x1="1241.0" y1="380.5" x2="1241.0" y2="391.5" stroke="#8a8a8a" stroke-width="0.8"/>
<line x1="1244.3" y1="380.5" x2="1244.3" y2="391.5" stroke="#8a8a8a" stroke-width="0.8"/>
<line x1="1247.7" y1="380.5" x2="1247.7" y2="391.5" stroke="#8a8a8a" stroke-width="0.8"/>
<line x1="1251.0" y1="380.5" x2="1251.0" y2="391.5" stroke="#8a8a8a" stroke-width="0.8"/>
<rect x="1341.0" y="299.5" width="9" height="9" fill="#c9c9c9" stroke="#707070" stroke-width="0.6"/>
<line x1="1342.5" y1="299.5" x2="1342.5" y2="308.5" stroke="#8a8a8a" stroke-width="0.8"/>
<line x1="1345.5" y1="299.5" x2="1345.5" y2="308.5" stroke="#8a8a8a" stroke-width="0.8"/>
<line x1="1348.5" y1="299.5" x2="1348.5" y2="308.5" stroke="#8a8a8a" stroke-width="0.8"/>
<rect x="1338.5" y="300.0" width="9" height="8" fill="#c9c9c9" stroke="#707070" stroke-width="0.6"/>
<line x1="1340.0" y1="300.0" x2="1340.0" y2="308.0" stroke="#8a8a8a" stroke-width="0.8"/>
<line x1="1343.0" y1="300.0" x2="1343.0" y2="308.0" stroke="#8a8a8a" stroke-width="0.8"/>
<line x1="1346.0" y1="300.0" x2="1346.0" y2="308.0" stroke="#8a8a8a" stroke-width="0.8"/>
<rect x="1382.6" y="311.0" width="12" height="8" fill="#c9c9c9" stroke="#707070" stroke-width="0.6"/>
<line x1="1384.1" y1="311.0" x2="1384.1" y2="319.0" stroke="#8a8a8a" stroke-width="0.8"/>
<line x1="1387.1" y1="311.0" x2="1387.1" y2="319.0" stroke="#8a8a8a" stroke-width="0.8"/>
<line x1="1390.1" y1="311.0" x2="1390.1" y2="319.0" stroke="#8a8a8a" stroke-width="0.8"/>
<line x1="1393.1" y1="311.0" x2="1393.1" y2="319.0" stroke="#8a8a8a" stroke-width="0.8"/>
<rect x="1423.0" y="319.0" width="12" height="8" fill="#c9c9c9" stroke="#707070" stroke-width="0.6"/>
<line x1="1424.5" y1="319.0" x2="1424.5" y2="327.0" stroke="#8a8a8a" stroke-width="0.8"/>
<line x1="1427.5" y1="319.0" x2="1427.5" y2="327.0" stroke="#8a8a8a" stroke-width="0.8"/>
<line x1="1430.5" y1="319.0" x2="1430.5" y2="327.0" stroke="#8a8a8a" stroke-width="0.8"/>
<line x1="1433.5" y1="319.0" x2="1433.5" y2="327.0" stroke="#8a8a8a" stroke-width="0.8"/>
<rect x="1455.0" y="323.5" width="12" height="9" fill="#c9c9c9" stroke="#707070" stroke-width="0.6"/>
<line x1="1456.5" y1="323.5" x2="1456.5" y2="332.5" stroke="#8a8a8a" stroke-width="0.8"/>
<line x1="1459.5" y1="323.5" x2="1459.5" y2="332.5" stroke="#8a8a8a" stroke-width="0.8"/>
<line x1="1462.5" y1="323.5" x2="1462.5" y2="332.5" stroke="#8a8a8a" stroke-width="0.8"/>
<line x1="1465.5" y1="323.5" x2="1465.5" y2="332.5" stroke="#8a8a8a" stroke-width="0.8"/>
<rect x="1531.5" y="324.5" width="9" height="7" fill="#c9c9c9" stroke="#707070" stroke-width="0.6"/>
<line x1="1533.0" y1="324.5" x2="1533.0" y2="331.5" stroke="#8a8a8a" stroke-width="0.8"/>
<line x1="1536.0" y1="324.5" x2="1536.0" y2="331.5" stroke="#8a8a8a" stroke-width="0.8"/>
<line x1="1539.0" y1="324.5" x2="1539.0" y2="331.5" stroke="#8a8a8a" stroke-width="0.8"/>
<rect x="1559.5" y="329.7" width="7" height="8" fill="#c9c9c9" stroke="#707070" stroke-width="0.6"/>
<line x1="1561.0" y1="329.7" x2="1561.0" y2="337.7" stroke="#8a8a8a" stroke-width="0.8"/>
<line x1="1565.0" y1="329.7" x2="1565.0" y2="337.7" stroke="#8a8a8a" stroke-width="0.8"/>
<rect x="1575.0" y="327.5" width="8" height="7" fill="#c9c9c9" stroke="#707070" stroke-width="0.6"/>
<line x1="1576.5" y1="327.5" x2="1576.5" y2="334.5" stroke="#8a8a8a" stroke-width="0.8"/>
<line x1="1581.5" y1="327.5" x2="1581.5" y2="334.5" stroke="#8a8a8a" stroke-width="0.8"/>
<rect x="1590.5" y="333.7" width="9" height="8" fill="#c9c9c9" stroke="#707070" stroke-width="0.6"/>
<line x1="1592.0" y1="333.7" x2="1592.0" y2="341.7" stroke="#8a8a8a" stroke-width="0.8"/>
<line x1="1595.0" y1="333.7" x2="1595.0" y2="341.7" stroke="#8a8a8a" stroke-width="0.8"/>
<line x1="1598.0" y1="333.7" x2="1598.0" y2="341.7" stroke="#8a8a8a" stroke-width="0.8"/>
<rect x="1407.3" y="377.0" width="11" height="10" fill="#c9c9c9" stroke="#707070" stroke-width="0.6"/>
<line x1="1408.8" y1="377.0" x2="1408.8" y2="387.0" stroke="#8a8a8a" stroke-width="0.8"/>
<line x1="1412.8" y1="377.0" x2="1412.8" y2="387.0" stroke="#8a8a8a" stroke-width="0.8"/>
<line x1="1416.8" y1="377.0" x2="1416.8" y2="387.0" stroke="#8a8a8a" stroke-width="0.8"/>
<rect x="1418.5" y="381.0" width="10" height="10" fill="#c9c9c9" stroke="#707070" stroke-width="0.6"/>
<line x1="1420.0" y1="381.0" x2="1420.0" y2="391.0" stroke="#8a8a8a" stroke-width="0.8"/>
<line x1="1423.5" y1="381.0" x2="1423.5" y2="391.0" stroke="#8a8a8a" stroke-width="0.8"/>
<line x1="1427.0" y1="381.0" x2="1427.0" y2="391.0" stroke="#8a8a8a" stroke-width="0.8"/>
<rect x="1457.0" y="378.9" width="8" height="9" fill="#c9c9c9" stroke="#707070" stroke-width="0.6"/>
<line x1="1458.5" y1="378.9" x2="1458.5" y2="387.9" stroke="#8a8a8a" stroke-width="0.8"/>
<line x1="1463.5" y1="378.9" x2="1463.5" y2="387.9" stroke="#8a8a8a" stroke-width="0.8"/>
<rect x="1476.5" y="380.2" width="7" height="9" fill="#c9c9c9" stroke="#707070" stroke-width="0.6"/>
<line x1="1478.0" y1="380.2" x2="1478.0" y2="389.2" stroke="#8a8a8a" stroke-width="0.8"/>
<line x1="1482.0" y1="380.2" x2="1482.0" y2="389.2" stroke="#8a8a8a" stroke-width="0.8"/>
<rect x="1200.0" y="356.1" width="6" height="9" fill="#c9c9c9" stroke="#707070" stroke-width="0.6"/>
<line x1="1201.5" y1="356.1" x2="1201.5" y2="365.1" stroke="#8a8a8a" stroke-width="0.8"/>
<line x1="1204.5" y1="356.1" x2="1204.5" y2="365.1" stroke="#8a8a8a" stroke-width="0.8"/>
<rect x="1156.0" y="340.0" width="8" height="8" fill="#c9c9c9" stroke="#707070" stroke-width="0.6"/>
<line x1="1157.5" y1="340.0" x2="1157.5" y2="348.0" stroke="#8a8a8a" stroke-width="0.8"/>
<line x1="1162.5" y1="340.0" x2="1162.5" y2="348.0" stroke="#8a8a8a" stroke-width="0.8"/>
<line x1="1138.7" y1="330.0" x2="1138.7" y2="361.0" stroke="#9a9a9a" stroke-width="1.3"/>
<rect x="1135.7" y="358.0" width="6" height="3" fill="#777"/>
<line x1="1197.8" y1="319.0" x2="1197.8" y2="355.0" stroke="#9a9a9a" stroke-width="1.3"/>
<rect x="1194.8" y="352.0" width="6" height="3" fill="#777"/>
<line x1="1247.5" y1="309.5" x2="1247.5" y2="341.8" stroke="#9a9a9a" stroke-width="1.3"/>
<rect x="1244.5" y="338.8" width="6" height="3" fill="#777"/>
<line x1="1294.0" y1="300.0" x2="1294.0" y2="333.7" stroke="#9a9a9a" stroke-width="1.3"/>
<rect x="1291.0" y="330.7" width="6" height="3" fill="#777"/>
<line x1="1285.0" y1="372.7" x2="1285.0" y2="409.0" stroke="#9a9a9a" stroke-width="1.3"/>
<rect x="1282.0" y="406.0" width="6" height="3" fill="#777"/>
<line x1="1344.0" y1="292.0" x2="1344.0" y2="315.0" stroke="#9a9a9a" stroke-width="1.3"/>
<rect x="1341.0" y="312.0" width="6" height="3" fill="#777"/>
<line x1="1391.3" y1="290.7" x2="1391.3" y2="320.0" stroke="#9a9a9a" stroke-width="1.3"/>
<rect x="1388.3" y="317.0" width="6" height="3" fill="#777"/>
<line x1="1465.0" y1="300.0" x2="1465.0" y2="331.0" stroke="#9a9a9a" stroke-width="1.3"/>
<rect x="1462.0" y="328.0" width="6" height="3" fill="#777"/>
<line x1="1540.0" y1="299.0" x2="1540.0" y2="331.0" stroke="#9a9a9a" stroke-width="1.3"/>
<rect x="1537.0" y="328.0" width="6" height="3" fill="#777"/>
<line x1="1580.6" y1="302.8" x2="1580.6" y2="333.7" stroke="#9a9a9a" stroke-width="1.3"/>
<rect x="1577.6" y="330.7" width="6" height="3" fill="#777"/>
<line x1="1423.5" y1="360.6" x2="1423.5" y2="395.5" stroke="#9a9a9a" stroke-width="1.3"/>
<rect x="1420.5" y="392.5" width="6" height="3" fill="#777"/>
<line x1="1388.6" y1="356.0" x2="1388.6" y2="376.0" stroke="#9a9a9a" stroke-width="1.3"/>
<rect x="1385.6" y="373.0" width="6" height="3" fill="#777"/>
<ellipse cx="1275.7" cy="387.5" rx="5" ry="7" fill="#c4c4c4" stroke="#777" stroke-width="0.6"/>
<polygon points="1249.0,361.7 1331.0,340.0 1367.0,326.7 1450.0,344.0 1414.0,358.0 1390.0,353.0 1312.0,374.5 1312.0,390.0 1255.6,372.0" fill="#d2c9b0" />
<polygon points="1303.0,317.4 1346.7,322.0 1346.7,367.0 1312.0,374.5 1303.0,372.0" fill="#b9593a" />
<polygon points="1346.7,322.0 1366.0,320.6 1366.0,359.0 1346.7,367.0" fill="#c5603c" />
<polygon points="1303.0,317.4 1323.0,314.5 1366.0,320.6 1346.7,322.0" fill="#9192ae" />
<polygon points="1303.0,317.4 1346.7,322.0 1346.7,325.0 1303.0,320.5" fill="#d06a45" />
<polygon points="1346.7,322.0 1366.0,320.6 1366.0,323.0 1346.7,325.0" fill="#d06a45" />
<polygon points="1349.0,327.0 1362.0,325.5 1362.0,358.0 1349.0,360.0" fill="#2b2f31" />
<polygon points="1351.0,329.0 1360.0,328.0 1360.0,341.0 1351.0,342.0" fill="#b49a98" />
<polygon points="1351.0,344.0 1360.0,343.0 1360.0,356.0 1351.0,357.0" fill="#9aa0a8" />
<polygon points="1258.0,358.5 1331.0,340.0 1331.0,372.0 1266.0,369.5" fill="#ebe5d8" />
<polygon points="1259.5,360.1 1269.7,357.5 1269.7,368.6 1259.5,368.2" fill="#2b2f31" />
<polygon points="1276.0,355.9 1281.0,354.7 1281.0,369.1 1276.0,368.9" fill="#2b2f31" />
<polygon points="1288.0,352.9 1298.0,350.4 1298.0,369.7 1288.0,369.3" fill="#2b2f31" />
<polygon points="1303.7,348.9 1313.0,346.6 1313.0,370.3 1303.7,369.9" fill="#2b2f31" />
<polygon points="1318.5,345.2 1327.4,342.9 1327.4,370.9 1318.5,370.5" fill="#2b2f31" />
<polygon points="1367.0,326.7 1450.0,344.0 1414.0,358.0 1390.0,353.0 1367.0,352.0" fill="#ebe5d8" />
<polygon points="1379.0,332.2 1384.0,333.2 1384.0,346.2 1379.0,345.2" fill="#2b2f31" />
<polygon points="1389.6,334.4 1393.0,335.1 1393.0,348.1 1389.6,347.4" fill="#2b2f31" />
<polygon points="1398.0,336.2 1403.5,337.3 1403.5,350.3 1398.0,349.2" fill="#2b2f31" />
<polygon points="1408.7,338.4 1419.0,340.5 1419.0,353.5 1408.7,351.4" fill="#2b2f31" />
<polygon points="1425.0,341.8 1429.6,342.7 1429.6,355.7 1425.0,354.8" fill="#2b2f31" />
<polygon points="1434.8,343.8 1445.0,346.0 1445.0,359.0 1434.8,356.8" fill="#2b2f31" />
<polygon points="1313.0,374.0 1390.0,353.0 1414.0,358.0 1518.0,325.0 1522.0,331.0 1416.0,364.0 1390.0,359.0 1316.0,380.0" fill="#c5603c" />
<polygon points="1313.0,374.0 1455.0,410.0 1455.0,461.0 1424.0,471.0 1313.0,433.0" fill="#8c4a2f" />
<line x1="1313.0" y1="374.0" x2="1455.0" y2="410.0" stroke="#7a7a86" stroke-width="1" />
<rect x="1322" y="398" width="13" height="18" fill="#c9a096" opacity="0.8"/>
<line x1="1351.0" y1="396.0" x2="1351.0" y2="408.0" stroke="#1010e0" stroke-width="1.5" />
<line x1="1351.0" y1="408.0" x2="1343.0" y2="412.0" stroke="#e01010" stroke-width="1.5" />
<line x1="1351.0" y1="408.0" x2="1360.0" y2="411.0" stroke="#10c010" stroke-width="1.5" />
<polygon points="1690.1,86.4 1728.6,81.7 1768.5,86.1 1732.7,93" fill="#fafafa" stroke="#333" stroke-width="1"/>
<polygon points="1690.1,86.4 1732.7,93 1732.7,157.4 1694.6,136.2" fill="#ffffff" stroke="#333" stroke-width="1"/>
<polygon points="1732.7,93 1768.5,86.1 1763.8,134.7 1732.7,157.4" fill="#f6f6f6" stroke="#333" stroke-width="1"/>
<text x="0" y="0" font-family="Liberation Sans" font-size="7.2" fill="#8a8a8a" transform="translate(1699.5,121) rotate(15) scale(1,2.0)">Справа</text>
<text x="0" y="0" font-family="Liberation Sans" font-size="7.6" fill="#8a8a8a" transform="translate(1743,131) rotate(-33) scale(1,1.9)">Сзади</text>
<circle cx="995.7" cy="703.7" r="46.3" fill="#606060"/>
<line x1="996" y1="703" x2="996" y2="682" stroke="#0000ff" stroke-width="2.2"/>
<polygon points="996,675.5 992.8,684 999.2,684" fill="#0000ff"/>
<line x1="996" y1="704.5" x2="981" y2="709.5" stroke="#ff0000" stroke-width="2.2"/>
<polygon points="974.7,711.8 982,705.8 984,711.5" fill="#ff0000"/>
<line x1="996" y1="704.5" x2="1012" y2="709" stroke="#00ee00" stroke-width="2.2"/>
<polygon points="1019.9,710.7 1011,704.5 1010.5,711.5" fill="#00ee00"/>
<circle cx="996.1" cy="704.4" r="3.6" fill="#bdbdbd"/>
<text x="994.5" y="670.5" font-family="Liberation Sans" font-size="11" font-weight="700" fill="#0000ff">Z</text>
<text x="966.5" y="715" font-family="Liberation Sans" font-size="11" fill="#ff0000">X</text>
<text x="1025.5" y="714" font-family="Liberation Sans" font-size="11" fill="#00dd00">Y</text>
</svg>
<div id="panel" class="a">
  <!-- left card -->
  <div class="card" style="left:5px;top:47px;width:424px;height:724px">
    <div class="cbody"></div><div class="chead"></div>
  </div>
  <!-- right card -->
  <div class="card" style="left:447px;top:47px;width:416px;height:724px">
    <div class="cbody"></div><div class="chead"></div>
  </div>
  <div class="a" style="left:432px;top:418px;width:2px;height:27px;background:#3d9fbf"></div>
  <div class="a" style="left:871px;top:432px;width:2px;height:27px;background:#3d9fbf"></div>
</div>

<!-- viewer button -->
<div class="a" style="left:946px;top:37px;width:32px;height:32px;background:#545454"></div>

<div id="rtb" class="a">
  <div class="rsep" style="top:91px"></div>
  <div class="rsep" style="top:360px"></div>
  <div class="rsep" style="top:409px"></div>
  <div class="rsep" style="top:590px"></div>
  <div class="a" style="left:2px;top:600px;width:32px;height:32px;background:#808080"></div>
  <div class="a" style="left:2px;top:644px;width:32px;height:32px;background:#808080"></div>
  <div class="rsep" style="top:684px"></div>
</div>

<!-- TEXT -->
<div class="t" style="left:456px;top:7px;font-size:13.5px;color:#e4e4e4">Базовое пространство</div>
<div class="t" style="left:1017px;top:3.5px;font-size:18px;color:#e4e4e4">Школа</div>
<div class="t" style="left:101px;top:55px;font-size:12px;color:#e6e6e6">ВОРМ</div>
<div class="t" style="left:75px;top:94.5px;font-size:13.5px;font-weight:700;color:#e6e6e6">ВОРМ</div>
<div class="t" style="left:517px;top:94.5px;font-size:13px;font-weight:700;color:#e6e6e6">Правило не выбрано</div>
<div class="t" style="left:515px;top:130px;font-size:12px;color:#222">Правило не выбрано</div>

<!-- select -->
<div class="a" style="left:73px;top:128px;width:408px;height:40px;border:1px solid #8a8a8a;border-radius:4px"></div>
<div class="a" style="left:84px;top:122px;width:98px;height:10px;background:#fff"></div>
<div class="t" style="left:89px;top:122px;font-size:12px;color:#555">Выбрать ВОРМ</div>
<div class="t" style="left:89px;top:140px;font-size:16.5px;color:#111">ворм-7</div>

<!-- tree -->
<div class="t" style="left:94px;top:193.5px;font-size:10px;letter-spacing:0.9px;color:#3d9fbf">Развернуть дерево</div>
<div class="a" style="left:66px;top:216px;width:423px;height:24px;background:#f4f4f4"></div>
<div class="t" style="left:87px;top:223px;font-size:12.5px;color:#222">01 - Раздел - 1</div>
<div class="t" style="left:97px;top:247px;font-size:12.5px;font-weight:700;color:#222">01-1-1</div>
<div class="t" style="left:97px;top:264.5px;font-size:10px;color:#777">Новый класс - 01-1-1</div>
<div class="t" style="left:375px;top:247px;font-size:12.5px;color:#222">352</div>
<div class="a" style="left:121px;top:294px;width:25px;height:13px;background:#d4d4d4"></div>
<div class="t" style="left:121px;top:294px;font-size:12.5px;font-weight:700;color:#222">02-1</div>
<div class="t" style="left:97px;top:315.5px;font-size:10px;color:#777">Материалы - 1 (Новый</div>
<div class="t" style="left:378px;top:292px;font-size:12.5px;color:#222">52</div>
<div class="t" style="left:121px;top:345px;font-size:12.5px;font-weight:700;color:#222">08.4.03.02-0001</div>
<div class="t" style="left:97px;top:366.5px;font-size:10px;color:#777">Сталь арматурная</div>
<div class="t" style="left:371px;top:343px;font-size:12.5px;color:#222">1824</div>
<div class="t" style="left:368px;top:366.5px;font-size:10px;color:#777">етр 6-22 мм ( Арма...</div>
<div class="t" style="left:97px;top:394px;font-size:12.5px;font-weight:700;color:#222">05-01-010-02</div>
<div class="t" style="left:97px;top:411.5px;font-size:10px;color:#777">Вырубка бетона из</div>
<div class="t" style="left:375px;top:394px;font-size:12.5px;color:#222">365</div>
<div class="t" style="left:370px;top:411.5px;font-size:10px;color:#777">: свай площадью с...</div>
<div class="t" style="left:87px;top:438.3px;font-size:12.6px;color:#222">02 - Раздел - 2</div>

<!-- context menu -->
<div class="a" style="left:185px;top:226px;width:187px;height:291px;background:#efefef;box-shadow:0 5px 6px -3px rgba(0,0,0,.2),0 9px 12px 1px rgba(0,0,0,.14),0 3px 16px 2px rgba(0,0,0,.12)">
  <div class="a" style="left:0;top:48px;width:187px;height:1px;background:#d2d2d2"></div>
  <div class="a" style="left:0;top:97px;width:187px;height:1px;background:#d2d2d2"></div>
  <div class="a" style="left:0;top:242px;width:187px;height:1px;background:#d2d2d2"></div>
</div>
<div class="t" style="left:201px;top:244px;font-size:12.3px;color:#222">Экспорт ВОРМ</div>
<div class="t" style="left:201px;top:293px;font-size:12.3px;color:#222">Добавить корневой раздел</div>
<div class="t" style="left:201px;top:342px;font-size:12.3px;color:#222">Добавить подраздел</div>
<div class="t" style="left:201px;top:390px;font-size:12.3px;color:#222">Редактировать раздел</div>
<div class="t" style="left:201px;top:438px;font-size:12.3px;color:#222">Удалить раздел</div>
<div class="t" style="left:201px;top:487px;font-size:12.3px;color:#222">Добавить правило</div>

<svg width="1840" height="819" viewBox="0 0 1840 819" id="icons">
<g transform="translate(4,37)" fill="#e2e2e2" stroke="none"><rect x="8" y="9" width="11.6" height="6" rx="3"/><path d="M19 11.2h3.8a1.6 1.6 0 0 1 1.6 1.6V36.9" fill="none" stroke="#e2e2e2" stroke-width="1.8"/><path d="M24.3 15.8H29M24.3 25.8H29M23.4 36H29" fill="none" stroke="#e2e2e2" stroke-width="1.8"/><rect x="31" y="13.8" width="9.2" height="4.1" rx="2"/><rect x="31" y="23.8" width="9.2" height="4.1" rx="2"/><rect x="31" y="33.9" width="9.2" height="4.1" rx="2"/></g>
<g transform="translate(4,87)" fill="#e2e2e2"><path d="M19.05 15.8V31.1M19.3 17.5Q22 24 28.7 27" stroke="#e2e2e2" stroke-width="2" fill="none"/><circle cx="19.05" cy="15.8" r="3.1"/><circle cx="28.7" cy="27" r="3.1"/><circle cx="19.05" cy="31.1" r="3.1"/></g>
<g transform="translate(4,137)" fill="none" stroke="#e2e2e2" stroke-width="2.1" stroke-linecap="round"><path d="M10.5 14.1Q17 13.8 20 18.5L23.4 22.9Q27 31.5 39.5 31.7"/><path d="M10.5 31.7Q17 32 20 27.3L23.4 22.9Q27 14.3 39.5 14.1"/><path d="M31.1 8.8Q36 11.5 39.8 14.1Q36 16.5 31.1 20.2M31.1 25.8Q36 28.5 39.8 31.7Q36 34 31.1 37.2"/></g>
<g transform="translate(4,187)" fill="none" stroke="#e2e2e2" stroke-width="2.4" stroke-linecap="round" stroke-linejoin="round"><path d="M31 13.5Q23 12.5 15.5 13.5L24.5 23L15.5 33.5Q23 32.5 31 33.5"/></g>
<g transform="translate(4,237)" fill="none" stroke="#e2e2e2" stroke-width="2.4" stroke-linecap="round" stroke-linejoin="round"><path d="M26.2 14Q18.5 13 11.5 14L21.8 23.7L11.5 32.8Q18.5 31.8 26.2 32.8"/><path d="M33.1 19.5V28.3M28.6 23.8H37.6" stroke-width="2" stroke-linecap="butt"/></g>
<g transform="translate(4,287)" fill="none" stroke="#e2e2e2" stroke-width="2"><path d="M12 9.8Q24 8.5 35.6 10.2Q33.5 22 34.3 36.9H12Z"/><path d="M24.5 35.5L26 33.4H33" stroke-width="1.6"/><text x="15.8" y="26.8" font-family="Liberation Sans" font-size="12" fill="#e2e2e2" stroke="none">2D</text></g>
<g transform="translate(4,337)" fill="none" stroke="#e2e2e2" stroke-width="1.6"><rect x="20.7" y="9" width="6.6" height="9.6" rx="1.4"/><rect x="9" y="29.5" width="6.6" height="9.9" rx="1.4"/><rect x="20.7" y="29.5" width="6.6" height="9.9" rx="1.4"/><rect x="32.3" y="29.5" width="6.6" height="9.9" rx="1.4"/><path d="M24 18.6V29.5M12.3 29.5V24.3H35.6V29.5"/></g>
<g transform="translate(4,387)" fill="none" stroke="#e2e2e2" stroke-width="2.1" stroke-linecap="round" stroke-linejoin="round"><path d="M12.3 15.8Q16 11 18.8 10.8Q20.5 11 25.2 18.2Q30 12 36.3 8.8"/><path d="M12 24.3Q14 22 15.2 22.3Q17 22.5 21.4 28.5Q26 25.5 35.8 24"/><path d="M12.3 35.9H35.8" stroke-width="2.2" stroke-linecap="butt"/></g>
<g transform="translate(4,437)" fill="none" stroke="#e2e2e2" stroke-width="2" stroke-linejoin="round"><path d="M15 15H20.5V12.5A2.7 2.7 0 0 1 25.9 12.5V15H31.5A2 2 0 0 1 33.5 17V22.4H36A2.7 2.7 0 0 1 36 27.8H33.5V33A2 2 0 0 1 31.5 35H25.9V33.4A2.7 2.7 0 0 0 20.5 33.4V35H15A2 2 0 0 1 13 33V27.8H14.3A2.7 2.7 0 0 0 14.3 22.4H13V17A2 2 0 0 1 15 15Z"/></g>
<g transform="translate(4,487)" fill="none" stroke="#e2e2e2" stroke-width="1.8" stroke-linecap="round"><circle cx="23.4" cy="16.1" r="5.6"/><path d="M22.6 32.8H11.4Q12 24 23.4 23.2Q30.5 23.3 34 29.5" stroke-linecap="butt"/><path d="M27.6 31.8L31.9 38.4L39.3 29.6" stroke-width="2.6"/></g>
<g transform="translate(4,537)" fill="none" stroke="#e2e2e2" stroke-width="1.9" stroke-linejoin="round" stroke-linecap="round"><path d="M8.8 15.3Q13 14 18.2 14.6L20.5 17.9H29.9L33.7 26.4L38.9 27.6L34.6 34.9H14.1Q11.7 32 8.8 15.3Z"/><path d="M33.7 26.4L34.6 34.9M20.8 27H33.7M25.6 22.6L20.8 27L25.6 31.6"/></g>
<g transform="translate(4,587)" fill="none" stroke="#e2e2e2" stroke-width="1.8"><circle cx="18.5" cy="15.9" r="5.4"/><path d="M27 30.2H8.6Q9.5 22.3 18.5 22Q22.5 22 24.6 24.3"/><path d="M32.8 37.3Q26.8 32 26.8 28.5A6 6 0 0 1 38.8 28.5Q38.8 32 32.8 37.3Z"/><circle cx="32.8" cy="28.6" r="1.4" fill="#e2e2e2" stroke="none"/></g>
<g transform="translate(4,637)" fill="none" stroke="#e2e2e2" stroke-width="2"><circle cx="24" cy="21.7" r="12.6"/><path d="M9.1 39H39" stroke-width="2.2"/><path d="M22 34.3V38M26 34.3V38" stroke-width="1.5"/><path d="M15 22A9 9 0 0 1 33 22" stroke-width="1.3" stroke-dasharray="1.5 2"/><path d="M20.3 25.5L25.8 15L25.5 27.5Q23 29.5 20.3 25.5Z" fill="#e2e2e2" stroke="none"/></g>
<rect x="4" y="6" width="48" height="15" fill="#fff"/>
<g fill="none" stroke="#1a1a1a" stroke-width="1.35" stroke-linejoin="round"><path d="M8.7 9.2V17.8"/><path d="M11 9.7H15.2Q17.3 9.7 17.3 11.6Q17.3 13.4 15.3 13.4H11.3M15.3 13.4Q17.6 13.4 17.6 15.5Q17.6 17.4 15.3 17.4H11"/><path d="M20.8 12V17.8M24.3 17.8V9.6L29.2 17L34.3 9.6V17.8M38.4 12V17.8M41.2 10H49.2M45.2 10V17.8"/></g><rect x="20.2" y="9.2" width="1.3" height="1.4" fill="#1a1a1a"/><rect x="37.3" y="9" width="2.1" height="2.1" fill="#f00"/>
<g fill="none" stroke="#e2e2e2" stroke-width="2"><rect x="353" y="8.3" width="18.2" height="12.2" rx="1.8"/><path d="M358.5 8V5a1.2 1.2 0 0 1 1.2-1.2h4.6a1.2 1.2 0 0 1 1.2 1.2V8M353 12.8H371"/><rect x="360.5" y="13" width="3" height="2" fill="#e2e2e2" stroke="none"/></g>
<g fill="#e2e2e2"><circle cx="396" cy="8.3" r="2.2" fill="none" stroke="#e2e2e2" stroke-width="1.6"/><path d="M390.2 21V17.2Q390.5 13.8 396 13.8Q401.5 13.8 401.8 17.2V21Z" fill="none" stroke="#e2e2e2" stroke-width="2"/><circle cx="388" cy="12" r="2.3"/><circle cx="404" cy="12" r="2.3"/><path d="M384 21V18.5Q384.5 15.8 387.8 15.5V21Z"/><path d="M408 21V18.5Q407.5 15.8 404.2 15.5V21Z"/></g>
<g fill="none" stroke="#e2e2e2" stroke-width="1.9"><path d="M436.7 13.5V8.2L428.4 4.5L422 7.8V13Q422 19 427.5 21.5"/><circle cx="435.5" cy="17.8" r="5.2"/><circle cx="435.5" cy="16.5" r="1.3" fill="#e2e2e2" stroke="none"/><path d="M432.8 20.3Q435.5 18.2 438.2 20.3" stroke-width="1.3"/></g>
<rect x="446.5" y="0" width="2" height="28" fill="#6a6a6a"/>
<path d="M631 11H641L636 16.3Z" fill="#dcdcdc"/>
<g transform="translate(1101,13)" fill="none" stroke="#e2e2e2" stroke-width="2"><path d="M-1.6-9.3h3.2l.5 2.6 1.6.9 2.5-.9 1.6 2.8-2 1.7v1.9l2 1.7-1.6 2.8-2.5-.9-1.6.9-.5 2.6h-3.2l-.5-2.6-1.6-.9-2.5.9-1.6-2.8 2-1.7v-1.9l-2-1.7 1.6-2.8 2.5.9 1.6-.9z" stroke-linejoin="round"/><circle r="2.8"/></g>
<path d="M1128.2 20.2Q1130 12 1139.5 11.6V15.5L1146.3 9.5L1139.5 3.6V7.5Q1129.5 8.5 1128.2 20.2Z" fill="#e2e2e2"/>
<path d="M1129.5 19Q1131.5 13.3 1139.5 13.2" stroke="#545454" stroke-width="0" fill="none"/>
<rect x="1647" y="0" width="2" height="28" fill="#6a6a6a"/>
<g fill="none" stroke="#e2e2e2" stroke-width="2.1"><circle cx="1679.3" cy="11.3" r="6"/><path d="M1683.6 15.8L1689.6 21.8"/></g>
<g fill="#e2e2e2"><circle cx="1741.3" cy="5.9" r="1.4"/><circle cx="1741.3" cy="12.4" r="1.4"/><circle cx="1741.3" cy="18.4" r="1.4"/><rect x="1744.3" y="4.9" width="14.6" height="2"/><rect x="1744.3" y="11.4" width="14.6" height="2"/><rect x="1744.3" y="17.4" width="14.6" height="2"/></g>
<g fill="none" stroke="#e2e2e2" stroke-width="1.7"><path d="M1790.2 9.2A8.8 8.8 0 1 0 1790.8 16.5"/></g><path d="M1788.3 12.8H1793.8L1791 16.2Z" fill="#e2e2e2"/><path d="M1777.6 16.6Q1778.8 15.3 1778.8 12.3Q1778.8 8.1 1782.4 7.9Q1786 8.1 1786 12.3Q1786 15.3 1787.2 16.6Z" fill="#e2e2e2"/><circle cx="1782.4" cy="18.2" r="1.1" fill="#e2e2e2"/><circle cx="1782.4" cy="7.4" r="0.8" fill="#e2e2e2"/>
<circle cx="1789.8" cy="19.8" r="4" fill="#b00010"/>
<rect x="1808" y="4" width="18.3" height="18" rx="1.8" fill="#e2e2e2"/>
<g fill="#545454"><circle cx="1817.1" cy="10.2" r="2.7"/><path d="M1811.8 19.2Q1812 15.2 1817.1 15Q1822.2 15.2 1822.4 19.2Z"/></g>
<g fill="none" stroke="#e2e2e2" stroke-width="1.5"><path d="M958.8 44.5H953.5V49.8M965.2 44.5H970.5V49.8M953.5 56V61.2H958.8M970.5 56V61.2H965.2"/></g>
<path d="M962 48.5L966.3 51V56L962 58.5L957.7 56V51Z" fill="#e2e2e2"/>
<g fill="#e2e2e2"><rect x="71" y="54" width="13" height="1.8"/><rect x="71" y="58" width="13" height="1.8"/><rect x="71" y="62" width="9" height="1.8"/><path d="M82 62.2L87 65L82 67.9Z"/></g>
<path d="M903 55L915.5 67.5M915.5 55L903 67.5" stroke="#e2e2e2" stroke-width="2"/>
<path d="M472 99H482L477 104Z" fill="#e0e0e0"/>
<path d="M906 99H916L911 104Z" fill="#e0e0e0"/>
<path d="M452 146H462L457 151Z" fill="#666"/>
<path d="M74.3 195.8L77.2 192.8L80.1 195.8M74.3 200L77.2 203L80.1 200" fill="none" stroke="#3d9fbf" stroke-width="1.3"/>
<path d="M433.1 195.5H445L440.7 201.8V208.8L437.3 205.8V201.8Z" fill="#3a96b4"/>
<rect x="460.1" y="195.1" width="13.8" height="13.9" rx="1" fill="none" stroke="#2e86a3" stroke-width="1.8"/>
<rect x="462.2" y="197.1" width="3.6" height="3.8" fill="#2e86a3"/>
<path d="M74.5 226.7H81.5L78 230.6Z" fill="#666"/>
<path d="M76.5 440.5V448L80.5 444.2Z" fill="#666"/>
<g fill="#111"><circle cx="185.2" cy="225" r="1.2"/><circle cx="185.2" cy="228.5" r="1.2"/><circle cx="185.2" cy="232" r="1.2"/></g>
<rect x="455" y="247.4" width="14" height="14" rx="1" fill="none" stroke="#5a5a5a" stroke-width="2"/>
<rect x="457.2" y="248.9" width="4" height="4" fill="#5a5a5a"/>
<rect x="455" y="292.7" width="14" height="14" rx="1" fill="none" stroke="#5a5a5a" stroke-width="2"/>
<rect x="457.2" y="294.2" width="4" height="4" fill="#5a5a5a"/>
<rect x="455" y="343" width="14" height="14" rx="1" fill="none" stroke="#5a5a5a" stroke-width="2"/>
<rect x="457.5" y="345.5" width="9" height="9" fill="#6a6a6a"/>
<rect x="455" y="394.3" width="14" height="14" rx="1" fill="none" stroke="#5a5a5a" stroke-width="2"/>
<rect x="457.5" y="396.8" width="9" height="9" fill="#6a6a6a"/>
<circle cx="108.9" cy="300.8" r="4" fill="#00e600"/><circle cx="108.8" cy="351.8" r="4" fill="#00e600"/>
<g fill="none" stroke="#e2e2e2" stroke-width="1.3" stroke-linecap="round"><path d="M1817.5 67Q1811.7 66.5 1811.8 61.5Q1812 57.3 1816.2 56.8Q1817 50 1823.5 49.9Q1830 50 1830.8 56.8Q1835 57.3 1835.1 61.5Q1835 66.5 1829.5 67"/><path d="M1823.5 55.5V73M1817.5 60.5L1823.5 66M1828.5 62.5L1823.5 66.5M1826.8 58.8L1823.5 61.5"/></g>
<g fill="none" stroke="#e2e2e2" stroke-width="1.3"><path d="M1818 109.6H1810.2V92.4H1833.6V99.7M1818 109.6V112.5H1815"/><path d="M1824 101.8H1820.5V105.5M1832 101.8H1835.7V105.5M1820.5 113.8V117.4H1824M1835.7 113.8V117.4H1832"/></g>
<path d="M1828 105.3L1832 107.6V112.2L1828 114.5L1824 112.2V107.6Z" fill="#e2e2e2"/>
<g fill="none" stroke="#e2e2e2" stroke-width="1.2"><rect x="1813.6" y="150.6" width="19.2" height="5.6"/><path d="M1816.5 151V154M1819.5 151V153M1822.5 151V154M1825.5 151V153M1828.5 151V154M1813 158.9H1833.4"/></g>
<path d="M1809.5 163.5L1813.5 168H1809.5Z" fill="#e2e2e2"/>
<path d="M1818.5 190.7L1828 184.3V205L1818.5 212.2Z" fill="#e2e2e2"/>
<path d="M1809.8 200.2L1815.3 194.7H1836L1830.5 200.2Z" fill="none" stroke="#e2e2e2" stroke-width="1.3"/>
<g fill="none" stroke="#e2e2e2" stroke-width="1.2"><path d="M1811.5 236.5L1816.5 231.7H1834.5V248.5L1829.5 253H1811.5Z M1811.5 236.5H1829.5V253M1829.5 236.5L1834.5 231.7"/></g>
<path d="M1820 236.5L1825 231.7V248.3L1820 253Z" fill="#e2e2e2" opacity="0.9"/>
<g fill="none" stroke="#e2e2e2" stroke-width="1.4"><path d="M1809.7 280L1814 275.8H1835.3V294.5H1809.7Z"/><path d="M1810.5 296.6H1836" stroke-width="1.2"/><path d="M1809.7 284.8H1835.3M1821.3 276V294.5" stroke-dasharray="2 1.3" stroke-width="1.1"/><path d="M1827.5 294.5V291.5H1835.3" stroke-width="1.1"/></g>
<g fill="none" stroke="#e2e2e2" stroke-width="1.7"><circle cx="1822.8" cy="329.9" r="7.6"/><path d="M1822.8 320V322M1822.8 337.8V339.8M1813 329.9H1815M1830.6 329.9H1832.6" stroke-width="1.6"/></g>
<circle cx="1822.8" cy="329.9" r="4" fill="#e2e2e2"/>
<g fill="none" stroke="#e2e2e2" stroke-width="1.2"><circle cx="1822.8" cy="374" r="12.6"/><path d="M1817.2 381.5V367.3Q1820.5 366 1823 367.5Q1825.3 369 1828.5 367.7V375Q1825.3 376.3 1823 374.9Q1820.5 373.4 1817.2 374.6"/></g>
<g fill="none" stroke="#e2e2e2" stroke-width="1.1"><path d="M1810 426.4L1836.9 411M1810.2 435.8L1836.9 420.4M1811 422L1827.6 431.9M1818.8 416L1835.8 425.9"/><circle cx="1815" cy="424" r="1.1" fill="#e2e2e2"/><circle cx="1824" cy="418.5" r="1.1" fill="#e2e2e2"/></g>
<text x="1807.7" y="421.5" font-family="Liberation Sans" font-size="6.5" fill="#e2e2e2">1</text>
<text x="1817.5" y="415" font-family="Liberation Sans" font-size="6.5" fill="#e2e2e2">2</text>
<rect x="1811.5" y="460.8" width="23" height="23" fill="none" stroke="#e2e2e2" stroke-width="1.2" stroke-dasharray="2 1.6"/>
<rect x="1811.5" y="504.7" width="23" height="23" fill="none" stroke="#e2e2e2" stroke-width="1.2" stroke-dasharray="2 1.6"/>
<rect x="1811.5" y="548.8" width="23" height="23" fill="none" stroke="#e2e2e2" stroke-width="1.2" stroke-dasharray="2 1.6"/>
<rect x="1811.5" y="592.9" width="23" height="23" fill="none" stroke="#e2e2e2" stroke-width="1.2" stroke-dasharray="2 1.6"/>
<g fill="none" stroke="#e2e2e2" stroke-width="1.1"><path d="M1822.8 466L1828 469V475L1822.8 478L1817.6 475V469Z M1817.6 469L1822.8 472L1828 469M1822.8 472V478"/></g>
<path d="M1812 516Q1823 504.5 1834 516Q1823 527.5 1812 516Z" fill="#e2e2e2"/>
<circle cx="1823" cy="516" r="3.3" fill="none" stroke="#545454" stroke-width="1.5"/>
<path d="M1812 560Q1823 548.5 1834 560Q1823 571.5 1812 560Z" fill="#e2e2e2"/>
<circle cx="1823" cy="560" r="3.3" fill="none" stroke="#545454" stroke-width="1.5"/>
<path d="M1815.5 552L1830.5 567.5" stroke="#545454" stroke-width="2.8"/><path d="M1815.5 552L1830.5 567.5" stroke="#e2e2e2" stroke-width="1.2"/>
<rect x="1820.9" y="602.4" width="15.9" height="15.9" fill="#dedede"/>
<path d="M1824 605.5L1833.8 615.3M1833.8 605.5L1824 615.3" stroke="#444" stroke-width="1.3"/>
<path d="M1812.9 645.4L1822.6 643.2L1832.5 646L1831.5 656L1822.6 663.6L1813.8 657Z" fill="none" stroke="#e2e2e2" stroke-width="1.3"/>
<path d="M1812.9 645.4L1822.6 648.5V663.6L1813.8 657Z" fill="#e2e2e2"/>
<path d="M1812.9 645.4L1822.6 643.2L1832.5 646L1822.6 648.5Z" fill="#e2e2e2" opacity="0.6"/>
<g fill="none" stroke="#e2e2e2" stroke-width="1.6"><ellipse cx="1823" cy="697.1" rx="11.4" ry="4.9"/><ellipse cx="1823" cy="697.1" rx="4.9" ry="10.8"/><path d="M1823 694V697.5L1819.5 700.5M1823 697.5L1826.5 700.5" stroke-width="1"/></g>
</svg>
<svg id="arr" width="1840" height="819" viewBox="0 0 1840 819">
<defs><filter id="sh" x="-50%" y="-50%" width="200%" height="200%"><feGaussianBlur in="SourceAlpha" stdDeviation="1.8"/><feOffset dx="3" dy="4"/><feComponentTransfer><feFuncA type="linear" slope="0.55"/></feComponentTransfer><feMerge><feMergeNode/><feMergeNode in="SourceGraphic"/></feMerge></filter></defs>
<g filter="url(#sh)" fill="#c00000">
<path d="M260.6 176.2L201.4 213.6" stroke="#c00000" stroke-width="2.6" stroke-linecap="round"/>
<polygon points="188.8,221.4 197.6,208 205.2,219.2"/>
<path d="M259 179L237.4 224.3" stroke="#c00000" stroke-width="2.6" stroke-linecap="round"/>
<polygon points="230.3,237.3 230.8,221.2 244,227.5"/>
</g>
</svg>
</body></html>
